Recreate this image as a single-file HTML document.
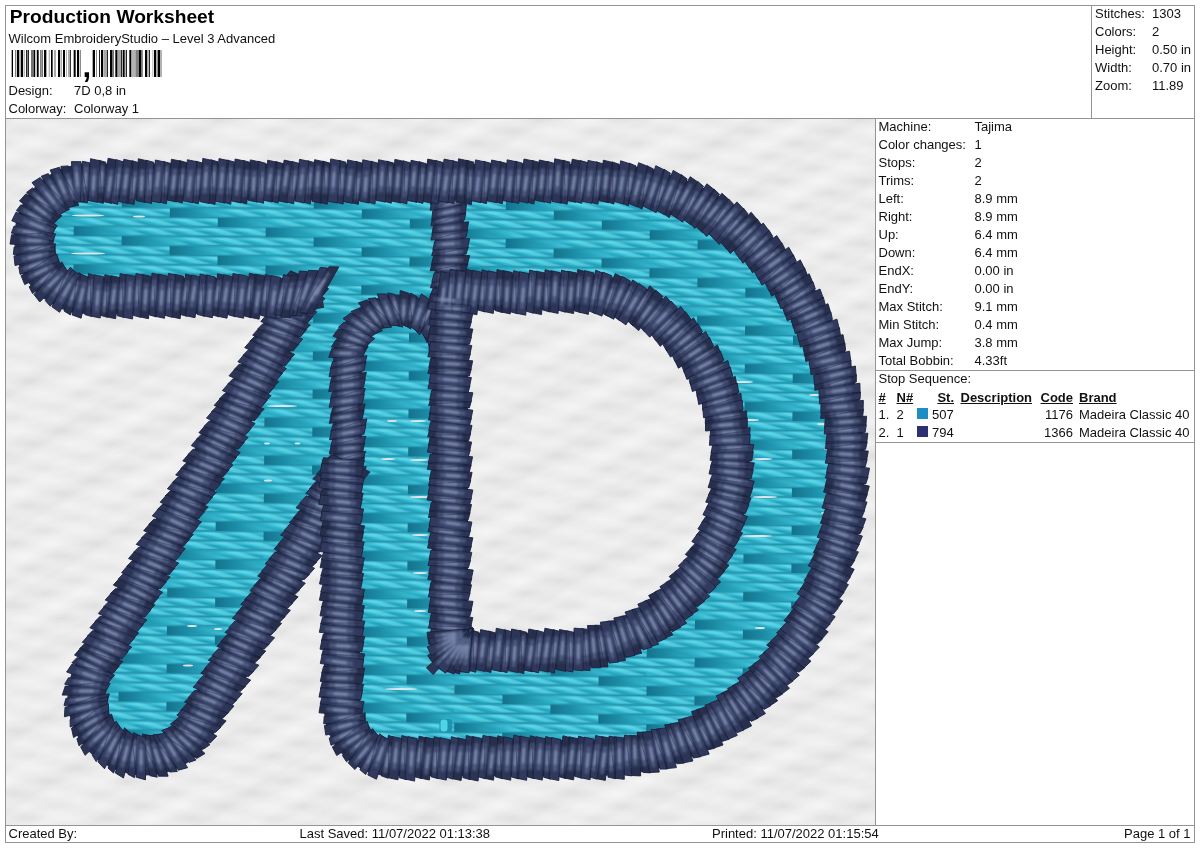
<!DOCTYPE html>
<html><head><meta charset="utf-8"><title>Production Worksheet</title>
<style>
html,body{margin:0;padding:0;background:#fff;}
body{width:1200px;height:848px;position:relative;overflow:hidden;font-family:"Liberation Sans",sans-serif;color:#111;}
.t{position:absolute;font-size:13px;line-height:15px;white-space:nowrap;}
.b{font-weight:bold;}
.u{text-decoration:underline;text-decoration-thickness:1px;text-underline-offset:0.5px;}
.title{position:absolute;left:9.8px;top:6px;font-size:19.2px;line-height:22px;font-weight:bold;white-space:nowrap;color:#000;}
.ln{position:absolute;background:#949494;}
.sw{position:absolute;width:11px;height:11px;}
svg{position:absolute;display:block;}
#pg{position:absolute;left:0;top:0;width:1200px;height:848px;will-change:transform;}
</style></head><body><div id="pg">

<div class="ln" style="left:5px;top:5px;width:1190px;height:1px"></div>
<div class="ln" style="left:5px;top:842px;width:1190px;height:1px"></div>
<div class="ln" style="left:5px;top:5px;width:1px;height:838px"></div>
<div class="ln" style="left:1194px;top:5px;width:1px;height:838px"></div>
<div class="ln" style="left:5px;top:118px;width:1190px;height:1px"></div>
<div class="ln" style="left:1091px;top:5px;width:1px;height:114px"></div>
<div class="ln" style="left:875px;top:118px;width:1px;height:708px"></div>
<div class="ln" style="left:5px;top:825px;width:1190px;height:1px"></div>
<div class="ln" style="left:875px;top:370px;width:320px;height:1px"></div>
<div class="ln" style="left:875px;top:442px;width:320px;height:1px"></div>
<div class="title">Production Worksheet</div>
<div class="t " style="left:8.5px;top:31.299999999999997px;">Wilcom EmbroideryStudio – Level 3 Advanced</div>
<div class="t " style="left:8.5px;top:82.6px;">Design:</div>
<div class="t " style="left:74px;top:82.6px;">7D 0,8 in</div>
<div class="t " style="left:8.5px;top:100.6px;">Colorway:</div>
<div class="t " style="left:74px;top:100.6px;">Colorway 1</div>
<div class="t " style="left:1095px;top:5.5px;">Stitches:</div>
<div class="t " style="left:1152px;top:5.5px;">1303</div>
<div class="t " style="left:1095px;top:23.5px;">Colors:</div>
<div class="t " style="left:1152px;top:23.5px;">2</div>
<div class="t " style="left:1095px;top:41.5px;">Height:</div>
<div class="t " style="left:1152px;top:41.5px;">0.50 in</div>
<div class="t " style="left:1095px;top:59.5px;">Width:</div>
<div class="t " style="left:1152px;top:59.5px;">0.70 in</div>
<div class="t " style="left:1095px;top:77.5px;">Zoom:</div>
<div class="t " style="left:1152px;top:77.5px;">11.89</div>
<div class="t " style="left:878.5px;top:118.5px;">Machine:</div>
<div class="t " style="left:974.5px;top:118.5px;">Tajima</div>
<div class="t " style="left:878.5px;top:136.5px;">Color changes:</div>
<div class="t " style="left:974.5px;top:136.5px;">1</div>
<div class="t " style="left:878.5px;top:154.5px;">Stops:</div>
<div class="t " style="left:974.5px;top:154.5px;">2</div>
<div class="t " style="left:878.5px;top:172.5px;">Trims:</div>
<div class="t " style="left:974.5px;top:172.5px;">2</div>
<div class="t " style="left:878.5px;top:190.5px;">Left:</div>
<div class="t " style="left:974.5px;top:190.5px;">8.9 mm</div>
<div class="t " style="left:878.5px;top:208.5px;">Right:</div>
<div class="t " style="left:974.5px;top:208.5px;">8.9 mm</div>
<div class="t " style="left:878.5px;top:226.5px;">Up:</div>
<div class="t " style="left:974.5px;top:226.5px;">6.4 mm</div>
<div class="t " style="left:878.5px;top:244.5px;">Down:</div>
<div class="t " style="left:974.5px;top:244.5px;">6.4 mm</div>
<div class="t " style="left:878.5px;top:262.5px;">EndX:</div>
<div class="t " style="left:974.5px;top:262.5px;">0.00 in</div>
<div class="t " style="left:878.5px;top:280.5px;">EndY:</div>
<div class="t " style="left:974.5px;top:280.5px;">0.00 in</div>
<div class="t " style="left:878.5px;top:298.5px;">Max Stitch:</div>
<div class="t " style="left:974.5px;top:298.5px;">9.1 mm</div>
<div class="t " style="left:878.5px;top:316.5px;">Min Stitch:</div>
<div class="t " style="left:974.5px;top:316.5px;">0.4 mm</div>
<div class="t " style="left:878.5px;top:334.5px;">Max Jump:</div>
<div class="t " style="left:974.5px;top:334.5px;">3.8 mm</div>
<div class="t " style="left:878.5px;top:352.5px;">Total Bobbin:</div>
<div class="t " style="left:974.5px;top:352.5px;">4.33ft</div>
<div class="t " style="left:878.5px;top:371px;">Stop Sequence:</div>
<div class="t b u" style="left:878.5px;top:389.5px;">#</div>
<div class="t b u" style="left:896.5px;top:389.5px;">N#</div>
<div class="t b u" style="right:246px;top:389.5px;">St.</div>
<div class="t b u" style="left:960.5px;top:389.5px;">Description</div>
<div class="t b u" style="right:127px;top:389.5px;">Code</div>
<div class="t b u" style="left:1079px;top:389.5px;">Brand</div>
<div class="t " style="left:878.5px;top:406.5px;">1.</div>
<div class="t " style="left:896.5px;top:406.5px;">2</div>
<div class="sw" style="left:917px;top:408px;background:#1b8fc3"></div>
<div class="t " style="left:932px;top:406.5px;">507</div>
<div class="t " style="right:127px;top:406.5px;">1176</div>
<div class="t " style="left:1079px;top:406.5px;">Madeira Classic 40</div>
<div class="t " style="left:878.5px;top:424.8px;">2.</div>
<div class="t " style="left:896.5px;top:424.8px;">1</div>
<div class="sw" style="left:917px;top:426px;background:#2b3170"></div>
<div class="t " style="left:932px;top:424.8px;">794</div>
<div class="t " style="right:127px;top:424.8px;">1366</div>
<div class="t " style="left:1079px;top:424.8px;">Madeira Classic 40</div>
<div class="t " style="left:8.5px;top:825.5px;">Created By:</div>
<div class="t " style="left:299.5px;top:825.5px;">Last Saved: 11/07/2022 01:13:38</div>
<div class="t " style="left:712px;top:825.5px;">Printed: 11/07/2022 01:15:54</div>
<div class="t " style="right:9.5px;top:825.5px;">Page 1 of 1</div>
<svg style="left:0;top:49.8px" width="170" height="27" viewBox="0 0 170 27"><rect x="11.67" y="0" width="1.33" height="27" fill="#000" fill-opacity="1"/><rect x="15.00" y="0" width="1.33" height="27" fill="#000" fill-opacity="0.5"/><rect x="17.00" y="0" width="2.00" height="27" fill="#000" fill-opacity="1"/><rect x="19.33" y="0" width="1.33" height="27" fill="#000" fill-opacity="0.45"/><rect x="21.00" y="0" width="2.00" height="27" fill="#000" fill-opacity="1"/><rect x="23.67" y="0" width="1.00" height="27" fill="#000" fill-opacity="0.4"/><rect x="26.00" y="0" width="1.33" height="27" fill="#000" fill-opacity="0.85"/><rect x="27.67" y="0" width="1.33" height="27" fill="#000" fill-opacity="0.85"/><rect x="31.00" y="0" width="2.67" height="27" fill="#000" fill-opacity="0.55"/><rect x="33.67" y="0" width="1.33" height="27" fill="#000" fill-opacity="1"/><rect x="35.33" y="0" width="1.33" height="27" fill="#000" fill-opacity="0.3"/><rect x="37.00" y="0" width="1.67" height="27" fill="#000" fill-opacity="1"/><rect x="40.00" y="0" width="1.33" height="27" fill="#000" fill-opacity="0.5"/><rect x="41.67" y="0" width="1.00" height="27" fill="#000" fill-opacity="0.8"/><rect x="44.00" y="0" width="2.33" height="27" fill="#000" fill-opacity="1"/><rect x="48.67" y="0" width="1.33" height="27" fill="#000" fill-opacity="0.3"/><rect x="51.00" y="0" width="1.67" height="27" fill="#000" fill-opacity="1"/><rect x="54.33" y="0" width="1.33" height="27" fill="#000" fill-opacity="0.5"/><rect x="58.00" y="0" width="2.00" height="27" fill="#000" fill-opacity="1"/><rect x="60.67" y="0" width="1.00" height="27" fill="#000" fill-opacity="0.5"/><rect x="63.00" y="0" width="2.00" height="27" fill="#000" fill-opacity="1"/><rect x="66.00" y="0" width="1.00" height="27" fill="#000" fill-opacity="0.3"/><rect x="68.33" y="0" width="1.33" height="27" fill="#000" fill-opacity="0.5"/><rect x="70.00" y="0" width="1.00" height="27" fill="#000" fill-opacity="0.8"/><rect x="73.67" y="0" width="2.00" height="27" fill="#000" fill-opacity="1"/><rect x="77.00" y="0" width="2.00" height="27" fill="#000" fill-opacity="1"/><rect x="79.67" y="0" width="1.33" height="27" fill="#000" fill-opacity="0.45"/><rect x="92.67" y="0" width="2.33" height="27" fill="#000" fill-opacity="1"/><rect x="96.00" y="0" width="1.00" height="27" fill="#000" fill-opacity="0.45"/><rect x="99.00" y="0" width="1.00" height="27" fill="#000" fill-opacity="0.85"/><rect x="101.00" y="0" width="2.00" height="27" fill="#000" fill-opacity="1"/><rect x="103.33" y="0" width="3.67" height="27" fill="#000" fill-opacity="0.35"/><rect x="107.00" y="0" width="1.00" height="27" fill="#000" fill-opacity="0.85"/><rect x="110.00" y="0" width="2.00" height="27" fill="#000" fill-opacity="1"/><rect x="112.33" y="0" width="1.33" height="27" fill="#000" fill-opacity="0.8"/><rect x="115.33" y="0" width="2.00" height="27" fill="#000" fill-opacity="1"/><rect x="117.33" y="0" width="3.67" height="27" fill="#000" fill-opacity="0.35"/><rect x="121.00" y="0" width="1.00" height="27" fill="#000" fill-opacity="0.85"/><rect x="122.67" y="0" width="2.00" height="27" fill="#000" fill-opacity="1"/><rect x="125.67" y="0" width="1.33" height="27" fill="#000" fill-opacity="0.85"/><rect x="129.33" y="0" width="2.00" height="27" fill="#000" fill-opacity="1"/><rect x="131.67" y="0" width="3.33" height="27" fill="#000" fill-opacity="0.3"/><rect x="135.33" y="0" width="3.67" height="27" fill="#000" fill-opacity="0.5"/><rect x="139.00" y="0" width="2.33" height="27" fill="#000" fill-opacity="1"/><rect x="141.33" y="0" width="1.67" height="27" fill="#000" fill-opacity="0.45"/><rect x="145.00" y="0" width="2.33" height="27" fill="#000" fill-opacity="1"/><rect x="148.67" y="0" width="1.33" height="27" fill="#000" fill-opacity="0.85"/><rect x="152.33" y="0" width="1.00" height="27" fill="#000" fill-opacity="0.3"/><rect x="154.00" y="0" width="2.00" height="27" fill="#000" fill-opacity="1"/><rect x="156.33" y="0" width="1.00" height="27" fill="#000" fill-opacity="0.45"/><rect x="157.67" y="0" width="2.33" height="27" fill="#000" fill-opacity="1"/><rect x="160.33" y="0" width="1.33" height="27" fill="#000" fill-opacity="0.45"/></svg>
<div class="t b" style="left:82.6px;top:48.5px;font-size:31px;line-height:36px;color:#000">,</div>
<svg style="left:6px;top:119px" width="869" height="706" viewBox="6 119 869 706"><defs>
<radialGradient id="fd"><stop offset="0" stop-color="#d8d8d8" stop-opacity=".6"/><stop offset="1" stop-color="#d9d9d9" stop-opacity="0"/></radialGradient>
<radialGradient id="fl"><stop offset="0" stop-color="#f7f7f7" stop-opacity=".6"/><stop offset="1" stop-color="#f7f7f7" stop-opacity="0"/></radialGradient>
<pattern id="fab" width="80" height="62.5" patternUnits="userSpaceOnUse"><rect width="80" height="62.5" fill="#ebebeb"/><ellipse cx="-18" cy="-6.5" rx="22" ry="6.5" fill="url(#fd)"/><ellipse cx="22" cy="-6.5" rx="20" ry="6" fill="url(#fl)"/><ellipse cx="62" cy="-6.5" rx="22" ry="6.5" fill="url(#fd)"/><ellipse cx="102" cy="-6.5" rx="20" ry="6" fill="url(#fl)"/><ellipse cx="142" cy="-6.5" rx="22" ry="6.5" fill="url(#fd)"/><ellipse cx="182" cy="-6.5" rx="20" ry="6" fill="url(#fl)"/><ellipse cx="-50" cy="6.0" rx="22" ry="6.5" fill="url(#fd)"/><ellipse cx="-10" cy="6.0" rx="20" ry="6" fill="url(#fl)"/><ellipse cx="30" cy="6.0" rx="22" ry="6.5" fill="url(#fd)"/><ellipse cx="70" cy="6.0" rx="20" ry="6" fill="url(#fl)"/><ellipse cx="110" cy="6.0" rx="22" ry="6.5" fill="url(#fd)"/><ellipse cx="150" cy="6.0" rx="20" ry="6" fill="url(#fl)"/><ellipse cx="-2" cy="18.5" rx="22" ry="6.5" fill="url(#fd)"/><ellipse cx="38" cy="18.5" rx="20" ry="6" fill="url(#fl)"/><ellipse cx="78" cy="18.5" rx="22" ry="6.5" fill="url(#fd)"/><ellipse cx="118" cy="18.5" rx="20" ry="6" fill="url(#fl)"/><ellipse cx="158" cy="18.5" rx="22" ry="6.5" fill="url(#fd)"/><ellipse cx="198" cy="18.5" rx="20" ry="6" fill="url(#fl)"/><ellipse cx="-34" cy="31.0" rx="22" ry="6.5" fill="url(#fd)"/><ellipse cx="6" cy="31.0" rx="20" ry="6" fill="url(#fl)"/><ellipse cx="46" cy="31.0" rx="22" ry="6.5" fill="url(#fd)"/><ellipse cx="86" cy="31.0" rx="20" ry="6" fill="url(#fl)"/><ellipse cx="126" cy="31.0" rx="22" ry="6.5" fill="url(#fd)"/><ellipse cx="166" cy="31.0" rx="20" ry="6" fill="url(#fl)"/><ellipse cx="-66" cy="43.5" rx="22" ry="6.5" fill="url(#fd)"/><ellipse cx="-26" cy="43.5" rx="20" ry="6" fill="url(#fl)"/><ellipse cx="14" cy="43.5" rx="22" ry="6.5" fill="url(#fd)"/><ellipse cx="54" cy="43.5" rx="20" ry="6" fill="url(#fl)"/><ellipse cx="94" cy="43.5" rx="22" ry="6.5" fill="url(#fd)"/><ellipse cx="134" cy="43.5" rx="20" ry="6" fill="url(#fl)"/><ellipse cx="-18" cy="56.0" rx="22" ry="6.5" fill="url(#fd)"/><ellipse cx="22" cy="56.0" rx="20" ry="6" fill="url(#fl)"/><ellipse cx="62" cy="56.0" rx="22" ry="6.5" fill="url(#fd)"/><ellipse cx="102" cy="56.0" rx="20" ry="6" fill="url(#fl)"/><ellipse cx="142" cy="56.0" rx="22" ry="6.5" fill="url(#fd)"/><ellipse cx="182" cy="56.0" rx="20" ry="6" fill="url(#fl)"/><ellipse cx="-50" cy="68.5" rx="22" ry="6.5" fill="url(#fd)"/><ellipse cx="-10" cy="68.5" rx="20" ry="6" fill="url(#fl)"/><ellipse cx="30" cy="68.5" rx="22" ry="6.5" fill="url(#fd)"/><ellipse cx="70" cy="68.5" rx="20" ry="6" fill="url(#fl)"/><ellipse cx="110" cy="68.5" rx="22" ry="6.5" fill="url(#fd)"/><ellipse cx="150" cy="68.5" rx="20" ry="6" fill="url(#fl)"/></pattern><linearGradient id="sg" x1="0" x2="0" y1="0" y2="1"><stop offset="0" stop-color="#fff" stop-opacity="0"/><stop offset=".3" stop-color="#fff" stop-opacity=".26"/><stop offset=".5" stop-color="#fff" stop-opacity="0"/><stop offset=".8" stop-color="#d2d2d2" stop-opacity=".15"/><stop offset="1" stop-color="#fff" stop-opacity="0"/></linearGradient><pattern id="streak" width="200" height="58" patternUnits="userSpaceOnUse" patternTransform="rotate(-33)"><rect width="200" height="58" fill="url(#sg)"/></pattern><linearGradient id="tg" x1="0" x2="1" y1="0" y2="0">
<stop offset="0" stop-color="#14728c"/><stop offset=".3" stop-color="#1c8ca6"/><stop offset=".75" stop-color="#2badc5" stop-opacity=".7"/><stop offset="1" stop-color="#3cc6dc" stop-opacity="0"/></linearGradient>
<linearGradient id="tv" x1="0" x2="0" y1="0" y2="1">
<stop offset="0" stop-color="#0f5f76" stop-opacity=".42"/><stop offset=".25" stop-color="#7eeaf8" stop-opacity=".38"/><stop offset=".6" stop-color="#86eefa" stop-opacity="0"/><stop offset="1" stop-color="#0f5f76" stop-opacity=".46"/></linearGradient><pattern id="teal" width="192" height="38.00" patternUnits="userSpaceOnUse" patternTransform="translate(73.75 226) rotate(0.4)"><rect width="192" height="38.0" fill="#2ab6d0"/><path d="M-32,1.0h13l26,7.5h-13z" fill="#9af2fc" fill-opacity=".34"/><path d="M-16,1.0h9l26,7.5h-9z" fill="#0f6a84" fill-opacity=".33"/><path d="M0,1.0h13l26,7.5h-13z" fill="#9af2fc" fill-opacity=".34"/><path d="M16,1.0h9l26,7.5h-9z" fill="#0f6a84" fill-opacity=".33"/><path d="M32,1.0h13l26,7.5h-13z" fill="#9af2fc" fill-opacity=".34"/><path d="M48,1.0h9l26,7.5h-9z" fill="#0f6a84" fill-opacity=".33"/><path d="M64,1.0h13l26,7.5h-13z" fill="#9af2fc" fill-opacity=".34"/><path d="M80,1.0h9l26,7.5h-9z" fill="#0f6a84" fill-opacity=".33"/><path d="M96,1.0h13l26,7.5h-13z" fill="#9af2fc" fill-opacity=".34"/><path d="M112,1.0h9l26,7.5h-9z" fill="#0f6a84" fill-opacity=".33"/><path d="M128,1.0h13l26,7.5h-13z" fill="#9af2fc" fill-opacity=".34"/><path d="M144,1.0h9l26,7.5h-9z" fill="#0f6a84" fill-opacity=".33"/><path d="M160,1.0h13l26,7.5h-13z" fill="#9af2fc" fill-opacity=".34"/><path d="M176,1.0h9l26,7.5h-9z" fill="#0f6a84" fill-opacity=".33"/><path d="M192,1.0h13l26,7.5h-13z" fill="#9af2fc" fill-opacity=".34"/><path d="M208,1.0h9l26,7.5h-9z" fill="#0f6a84" fill-opacity=".33"/><rect x="0" y="0.00" width="192" height="9.50" fill="url(#tv)"/><rect x="-192" y="0.30" width="67.2" height="9.20" fill="url(#tg)"/><rect x="0" y="0.30" width="67.2" height="9.20" fill="url(#tg)"/><path d="M-21,10.5h13l26,7.5h-13z" fill="#9af2fc" fill-opacity=".34"/><path d="M-5,10.5h9l26,7.5h-9z" fill="#0f6a84" fill-opacity=".33"/><path d="M11,10.5h13l26,7.5h-13z" fill="#9af2fc" fill-opacity=".34"/><path d="M27,10.5h9l26,7.5h-9z" fill="#0f6a84" fill-opacity=".33"/><path d="M43,10.5h13l26,7.5h-13z" fill="#9af2fc" fill-opacity=".34"/><path d="M59,10.5h9l26,7.5h-9z" fill="#0f6a84" fill-opacity=".33"/><path d="M75,10.5h13l26,7.5h-13z" fill="#9af2fc" fill-opacity=".34"/><path d="M91,10.5h9l26,7.5h-9z" fill="#0f6a84" fill-opacity=".33"/><path d="M107,10.5h13l26,7.5h-13z" fill="#9af2fc" fill-opacity=".34"/><path d="M123,10.5h9l26,7.5h-9z" fill="#0f6a84" fill-opacity=".33"/><path d="M139,10.5h13l26,7.5h-13z" fill="#9af2fc" fill-opacity=".34"/><path d="M155,10.5h9l26,7.5h-9z" fill="#0f6a84" fill-opacity=".33"/><path d="M171,10.5h13l26,7.5h-13z" fill="#9af2fc" fill-opacity=".34"/><path d="M187,10.5h9l26,7.5h-9z" fill="#0f6a84" fill-opacity=".33"/><path d="M203,10.5h13l26,7.5h-13z" fill="#9af2fc" fill-opacity=".34"/><path d="M219,10.5h9l26,7.5h-9z" fill="#0f6a84" fill-opacity=".33"/><rect x="0" y="9.50" width="192" height="9.50" fill="url(#tv)"/><rect x="-144" y="9.80" width="67.2" height="9.20" fill="url(#tg)"/><rect x="48" y="9.80" width="67.2" height="9.20" fill="url(#tg)"/><path d="M-10,20.0h13l26,7.5h-13z" fill="#9af2fc" fill-opacity=".34"/><path d="M6,20.0h9l26,7.5h-9z" fill="#0f6a84" fill-opacity=".33"/><path d="M22,20.0h13l26,7.5h-13z" fill="#9af2fc" fill-opacity=".34"/><path d="M38,20.0h9l26,7.5h-9z" fill="#0f6a84" fill-opacity=".33"/><path d="M54,20.0h13l26,7.5h-13z" fill="#9af2fc" fill-opacity=".34"/><path d="M70,20.0h9l26,7.5h-9z" fill="#0f6a84" fill-opacity=".33"/><path d="M86,20.0h13l26,7.5h-13z" fill="#9af2fc" fill-opacity=".34"/><path d="M102,20.0h9l26,7.5h-9z" fill="#0f6a84" fill-opacity=".33"/><path d="M118,20.0h13l26,7.5h-13z" fill="#9af2fc" fill-opacity=".34"/><path d="M134,20.0h9l26,7.5h-9z" fill="#0f6a84" fill-opacity=".33"/><path d="M150,20.0h13l26,7.5h-13z" fill="#9af2fc" fill-opacity=".34"/><path d="M166,20.0h9l26,7.5h-9z" fill="#0f6a84" fill-opacity=".33"/><path d="M182,20.0h13l26,7.5h-13z" fill="#9af2fc" fill-opacity=".34"/><path d="M198,20.0h9l26,7.5h-9z" fill="#0f6a84" fill-opacity=".33"/><path d="M214,20.0h13l26,7.5h-13z" fill="#9af2fc" fill-opacity=".34"/><path d="M230,20.0h9l26,7.5h-9z" fill="#0f6a84" fill-opacity=".33"/><rect x="0" y="19.00" width="192" height="9.50" fill="url(#tv)"/><rect x="-96" y="19.30" width="67.2" height="9.20" fill="url(#tg)"/><rect x="96" y="19.30" width="67.2" height="9.20" fill="url(#tg)"/><path d="M-31,29.5h13l26,7.5h-13z" fill="#9af2fc" fill-opacity=".34"/><path d="M-15,29.5h9l26,7.5h-9z" fill="#0f6a84" fill-opacity=".33"/><path d="M1,29.5h13l26,7.5h-13z" fill="#9af2fc" fill-opacity=".34"/><path d="M17,29.5h9l26,7.5h-9z" fill="#0f6a84" fill-opacity=".33"/><path d="M33,29.5h13l26,7.5h-13z" fill="#9af2fc" fill-opacity=".34"/><path d="M49,29.5h9l26,7.5h-9z" fill="#0f6a84" fill-opacity=".33"/><path d="M65,29.5h13l26,7.5h-13z" fill="#9af2fc" fill-opacity=".34"/><path d="M81,29.5h9l26,7.5h-9z" fill="#0f6a84" fill-opacity=".33"/><path d="M97,29.5h13l26,7.5h-13z" fill="#9af2fc" fill-opacity=".34"/><path d="M113,29.5h9l26,7.5h-9z" fill="#0f6a84" fill-opacity=".33"/><path d="M129,29.5h13l26,7.5h-13z" fill="#9af2fc" fill-opacity=".34"/><path d="M145,29.5h9l26,7.5h-9z" fill="#0f6a84" fill-opacity=".33"/><path d="M161,29.5h13l26,7.5h-13z" fill="#9af2fc" fill-opacity=".34"/><path d="M177,29.5h9l26,7.5h-9z" fill="#0f6a84" fill-opacity=".33"/><path d="M193,29.5h13l26,7.5h-13z" fill="#9af2fc" fill-opacity=".34"/><path d="M209,29.5h9l26,7.5h-9z" fill="#0f6a84" fill-opacity=".33"/><rect x="0" y="28.50" width="192" height="9.50" fill="url(#tv)"/><rect x="-48" y="28.80" width="67.2" height="9.20" fill="url(#tg)"/><rect x="144" y="28.80" width="67.2" height="9.20" fill="url(#tg)"/></pattern><filter id="bl" x="-5%" y="-5%" width="110%" height="110%"><feGaussianBlur stdDeviation="1.25"/></filter><filter id="bs" x="-5%" y="-5%" width="110%" height="110%"><feGaussianBlur stdDeviation="0.7"/></filter></defs><rect x="6" y="119" width="869" height="706" fill="url(#fab)"/><rect x="6" y="119" width="869" height="706" fill="url(#streak)"/><path d="M 89.5 181.5 L 600 182 C 736 182 847 309 847 465 C 847 626 736 758 600 758 L 392 758 A 50 50 0 0 1 342 708 L 342 476 L 196.5 727 A 59 59 0 0 1 93.5 669 L 300 296 L 89.5 296 A 57.25 57.25 0 0 1 89.5 181.5 Z M 450 292 L 580 292 C 663.6 292 732 370 732 465 C 732 567 654.6 651 560 651 L 450 651 Z" fill="url(#teal)" fill-rule="evenodd"/><ellipse cx="88" cy="215.5" rx="16" ry="1.1" fill="#dde8ec"/><ellipse cx="139" cy="216.5" rx="6" ry="1.1" fill="#dde8ec"/><ellipse cx="88" cy="253.5" rx="17" ry="1.1" fill="#dde8ec"/><ellipse cx="282" cy="406" rx="15" ry="1.1" fill="#dde8ec"/><ellipse cx="267" cy="443.5" rx="3" ry="1.1" fill="#dde8ec"/><ellipse cx="297.5" cy="443.5" rx="3" ry="1.1" fill="#dde8ec"/><ellipse cx="268" cy="480.5" rx="4" ry="1.1" fill="#dde8ec"/><ellipse cx="392" cy="421" rx="5" ry="1.1" fill="#dde8ec"/><ellipse cx="418" cy="421" rx="8" ry="1.1" fill="#dde8ec"/><ellipse cx="388" cy="459" rx="7" ry="1.1" fill="#dde8ec"/><ellipse cx="419" cy="460" rx="9" ry="1.1" fill="#dde8ec"/><ellipse cx="420" cy="535" rx="8" ry="1.1" fill="#dde8ec"/><ellipse cx="420" cy="573" rx="7" ry="1.1" fill="#dde8ec"/><ellipse cx="743" cy="382" rx="10" ry="1.1" fill="#dde8ec"/><ellipse cx="815" cy="395" rx="6" ry="1.1" fill="#dde8ec"/><ellipse cx="751" cy="420" rx="8" ry="1.1" fill="#dde8ec"/><ellipse cx="822" cy="424" rx="5" ry="1.1" fill="#dde8ec"/><ellipse cx="763" cy="459" rx="9" ry="1.1" fill="#dde8ec"/><ellipse cx="829" cy="449" rx="5" ry="1.1" fill="#dde8ec"/><ellipse cx="765" cy="497" rx="12" ry="1.1" fill="#dde8ec"/><ellipse cx="825" cy="513" rx="4" ry="1.1" fill="#dde8ec"/><ellipse cx="757" cy="536" rx="15" ry="1.1" fill="#dde8ec"/><ellipse cx="679" cy="619" rx="5" ry="1.1" fill="#dde8ec"/><ellipse cx="760" cy="628" rx="5" ry="1.1" fill="#dde8ec"/><ellipse cx="401" cy="689" rx="16" ry="1.1" fill="#dde8ec"/><ellipse cx="345" cy="560" rx="4" ry="1.1" fill="#dde8ec"/><ellipse cx="192" cy="626" rx="5" ry="1.1" fill="#dde8ec"/><ellipse cx="218" cy="629" rx="4" ry="1.1" fill="#dde8ec"/><ellipse cx="188" cy="665.5" rx="5" ry="1.1" fill="#dde8ec"/><ellipse cx="420" cy="497" rx="10" ry="1.1" fill="#dde8ec"/><ellipse cx="420" cy="611" rx="6" ry="1.1" fill="#dde8ec"/><path d="M 347.5 480 L 347.5 360 A 51 51 0 0 1 449.5 360 L 449.5 380" fill="none" stroke-linejoin="round" stroke-linecap="butt" stroke="#262e4d" stroke-width="29"/><path d="M328.8,487.2L330.8,477.8L365.2,472.2L363.2,481.6zM329.4,454L331.4,444.6L364.7,442.2L362.7,451.6zM329.3,423.3L331.3,413.9L364.2,409.7L362.2,419.1zM330.7,415.3L332.7,408.1L365.2,403.9L363.2,411.1zM330.1,383.6L332.1,376.4L366.4,372.4L364.4,379.6zM331.5,346.8L335.4,340.5L368.1,346.6L364.2,353zM332.8,336.2L338.6,328.6L371.6,340.1L365.8,347.7zM358.4,302.8L367.5,299.9L388,326.7L378.8,329.6zM400.2,290.5L409.3,293.4L408.1,326.7L399,323.8zM410.6,293L417.1,296.7L410.9,329L404.4,325.3zM447.4,311.5L450.5,318.3L427,342.6L423.9,335.7zM466.1,348.5L464.6,355.8L430.6,362.9L432,355.5zM467.8,357.3L465.8,366.7L432.3,371.7L434.3,362.3z" fill="#272f4c" stroke="#1a2140" stroke-width=".9" stroke-linejoin="round"/><path d="M328.5,470.6L330.5,461.2L364.5,457.2L362.5,466.6zM329.9,462.6L331.9,455.4L365.5,451.4L363.5,458.6zM330.9,431.9L332.9,424.7L367,418.9L365,426.1zM330.6,399.3L332.6,392.1L365.3,388.3L363.3,395.5zM328.7,391.6L330.7,382.2L365.4,378.2L363.4,387.6zM328.8,357.3L332,348.2L365.7,349.2L362.5,358.3zM343,318.6L350.8,313.1L378.9,331.3L371,336.8zM351,311.6L357.9,308.7L382.5,330.7L375.6,333.6zM387.8,292.8L395.1,294.5L402.6,327.1L395.3,325.4zM430.6,299.2L435.6,304.8L419.6,334.9L414.6,329.4zM440.2,303.4L445.9,311.1L426.2,339L420.5,331.3zM464.8,337.8L465,347.4L432.1,359.7L431.9,350.1zM467.5,373.4L465.5,382.8L432.6,387.2L434.6,377.8z" fill="#2c3555" stroke="#1a2140" stroke-width=".9" stroke-linejoin="round"/><path d="M330.2,479.2L332.2,472L366.2,466.4L364.2,473.6zM330.8,446L332.8,438.8L365.7,436.4L363.7,443.6zM329.5,439.9L331.5,430.5L366,424.7L364,434.1zM329.2,407.3L331.2,397.9L364.3,394.1L362.3,403.5zM329.1,376.8L331.1,367.4L366,361.4L364,370.8zM330.5,368.8L332.5,361.6L367,355.6L365,362.8zM338.5,327.1L344.1,322.2L374.7,338.5L369,343.3zM368.3,298.5L375.7,297.8L391.6,327.2L384.2,327.8zM377.2,293.9L386.8,294L399.4,325.4L389.7,325.4zM421.3,293.7L429.1,299.3L417.8,331.9L410,326.3zM456.1,318.7L459.2,327.8L430.1,348.9L427,339.8zM460.5,328.7L461.4,336.1L429.7,352.3L428.9,344.9zM466.4,365.3L464.4,372.5L431.3,377.5L433.3,370.3z" fill="#313a5c" stroke="#1a2140" stroke-width=".9" stroke-linejoin="round"/><g filter="url(#bl)" fill="none" stroke-linecap="round"><path d="M 347.5 480 L 347.5 360 A 51 51 0 0 1 449.5 360 L 449.5 380" stroke="#3a466c" stroke-width="21.1" stroke-opacity=".3" stroke-linejoin="round" stroke-linecap="butt"/><path d="M 347.5 480 L 347.5 360 A 51 51 0 0 1 449.5 360 L 449.5 380" stroke="#4a577f" stroke-width="10.2" stroke-opacity=".3" stroke-linejoin="round" stroke-linecap="butt"/><path d="M337,481.7L357,478.3M338.1,473.8L357.8,470.4M337.8,465.4L357.5,463M339.5,457.5L359,455.1M339.3,449.1L358.6,447.7M339.5,441.2L358.6,439.8M338.5,434.3L358.5,430.9M339.1,426.4L358.8,423M335.1,418L354.2,415.6M336.7,410.1L355.5,407.7M337.1,402.1L356.3,399.9M340.1,394.2L359.1,392M338,386.4L358.2,384M337.7,378.5L357.6,376.1M339.3,371.1L359.5,367.7M339.4,363.2L359.4,359.8M335.4,353L355,353.6M341.7,344.6L360.7,348.2M344.8,336.2L364,342.9M349.3,328.3L367,337.7M352.6,319.9L368.9,330.5M361.6,316.1L375.9,328.9M367.9,308.7L379.8,324.3M375.5,302.8L384.7,319.8M384.7,302.1L391.9,320.4M393.6,298L398,317M404,300.8L403.3,320.1M413.7,299.9L410.1,318.7M421.9,304.6L415.4,323.6M431.5,306.9L422.2,324.3M439.4,312.1L428,328.3M445.5,319.7L431.9,333.8M449.3,328.6L432.5,340.9M456.2,335.8L437.9,345.2M460,344.4L440.9,351.6M456,354.5L436.3,358.6M460.5,362.7L441.1,365.7M459.8,370.6L440.7,373.6M460.8,378.7L441.7,381.3" stroke="#5b6990" stroke-width="3.5" stroke-opacity=".72"/><path d="M342,480.9L352.3,479.1M342.6,473L352.9,471.2M342.8,464.8L353,463.6M344.1,456.9L354.2,455.7M344.1,448.8L354.1,448M343.9,440.9L353.7,440.1M343.2,433.5L353.6,431.7M343.5,425.6L353.7,423.8M339.9,417.4L349.8,416.2M341.1,409.5L350.8,408.3M342,401.6L351.9,400.4M344.6,393.7L354.4,392.5M343,385.8L353.4,384.6M342.3,377.9L352.6,376.7M344.1,370.3L354.6,368.5M343.8,362.4L354.2,360.6M340.3,353.2L350.4,353.5M346.1,345.4L355.9,347.3M349.5,337.8L359.4,341.3M353.4,330.4L362.5,335.3M356.6,322.5L365,328M364.9,319L372.3,325.6M370.9,312.7L377,320.8M377.7,306.8L382.5,315.6M386.5,306.6L390.2,316.1M394.7,302.4L396.9,312.2M403.8,305.7L403.5,315.7M412.9,304.3L411,314M420.3,309.4L416.9,319.2M429.4,311L424.6,320M436.5,316.2L430.5,324.6M442.2,323L435.2,330.3M445.1,331.7L436.3,338M451.9,338L442.4,342.9M455.3,346.2L445.4,349.8M451.5,355.5L441.3,357.6M455.6,363.4L445.6,365M455.4,371.3L445.5,372.9M456,379.4L446.1,380.6" stroke="#8d9cc0" stroke-width="2.6" stroke-opacity=".75"/></g><path d="M332.4,477.8L361.7,468.2M332.2,461.2L361.1,453.2M333,444.6L361.3,438.2M333.1,430.5L362.3,420.7M332.9,413.9L360.9,405.7M332.8,397.9L360.9,390.1M332.3,382.2L361.8,374.2M332.7,367.4L362.4,357.4M333.6,348.4L362.8,344.8M340,329.3L370.1,334.9M351.9,314.1L379.1,326M368.3,301.3L389.8,321.8M387.1,295.5L402.6,321.2M409.2,295L412.5,323.8M428.4,300.8L422.9,330.3M444.8,312.4L431.4,339.1M457.7,328.7L435.2,350.5M463.4,347.8L436.5,362.8M464.2,366.7L435.8,375.7M464,382.8L436,391.2" fill="none" stroke="#1c2340" stroke-width="1.1" stroke-opacity=".38" filter="url(#bs)"/><path d="M 347 466 L 196.5 727 A 59 59 0 0 1 93.5 669 L 307 284" fill="none" stroke-linejoin="round" stroke-linecap="butt" stroke="#262e4d" stroke-width="37"/><path d="M370.1,472L363.6,479.2L325,461.3L331.5,454.2zM354.2,500.4L347.7,507.5L309.5,488.7L315.9,481.5zM337.9,526.1L331.4,533.2L293.1,517.9L299.5,510.7zM332.6,532.4L327.3,537.6L289.3,522.5L294.6,517.3zM316.9,561.9L311.5,567.2L274,548.9L279.3,543.6zM300,589.5L294.7,594.7L257.6,576L263,570.7zM298.1,596.8L291.6,603.9L253.6,586L260.1,578.9zM281.6,623.4L275.1,630.5L236.1,613.6L242.5,606.4zM265.7,651.1L259.3,658.2L220.7,641.7L227.1,634.5zM260.5,657.4L255.1,662.6L216.9,646.3L222.2,641zM245.5,686.4L240.1,691.6L200.7,673.1L206,667.9zM228.8,712.3L223.5,717.6L184.5,702L189.9,696.8zM226.1,720.9L219.7,728L180.6,710.5L187,703.3zM205,753.5L196.7,758.4L165.1,730L173.3,725.1zM168.1,776.2L158.5,776.2L145.3,735.5L154.9,735.5zM157.2,777.2L149.9,775.7L142.3,734L149.6,735.5zM113.5,773.1L108,768.1L124.6,727.8L130.1,732.8zM79,745.8L76.9,738.7L111.5,714L113.6,721.1zM73.5,737.5L71.5,728.1L107.7,706.9L109.7,716.2zM62.2,695.1L65.3,686L107.8,686.1L104.7,695.2zM74.5,655.1L80.8,647.8L119.2,666.2L112.9,673.5zM79.6,648.7L84.9,643.4L122.9,661.5L117.7,666.9zM95,621.4L100.3,616.1L138.7,633L133.5,638.3zM110.4,593.7L115.6,588.4L154.9,605L149.6,610.4zM113.3,585.1L119.7,577.9L159,597L152.7,604.2zM128.5,558.6L134.8,551.3L175.1,567.8L168.8,575zM143.7,530.7L150,523.4L189.7,539L183.4,546.3zM148.8,524.3L154.1,519L193.4,534.4L188.2,539.7zM165.4,495.8L170.6,490.5L208.3,507.1L203,512.4zM180.8,468.6L186,463.3L224.5,478.8L219.3,484.1zM182.8,460.9L189.1,453.6L229.2,469.7L222.9,476.9zM198.9,432.7L205.2,425.5L244.5,442.1L238.2,449.3zM214.2,405.4L220.5,398.2L260.5,413.7L254.2,420.9zM219.3,399L224.6,393.7L264.3,409L259,414.3zM234.2,369.4L239.4,364.1L278.7,381.7L273.4,387.1zM249.8,341.2L255.1,335.9L294.7,354.4L289.5,359.7zM252.7,335.2L259,328L299.2,343.8L292.9,351.1zM269.5,306.4L275.8,299.2L313,316.5L306.7,323.8zM284.2,278L290.5,270.8L328.6,288.7L322.3,295.9z" fill="#272f4c" stroke="#1a2140" stroke-width=".9" stroke-linejoin="round"/><path d="M361.8,486.3L355.3,493.5L316.6,474.2L323,467.1zM356.5,492.6L351.2,497.9L312.7,478.8L318.1,473.6zM340.6,518.8L335.3,524L295.9,507.7L301.3,502.4zM324.5,547L319.2,552.2L280.5,535L285.8,529.8zM322.1,555.6L315.7,562.7L277.8,544.3L284.3,537.1zM305.3,583.2L298.8,590.3L261.4,571.3L267.9,564.2zM290.4,610.3L284,617.5L244.6,599.7L251,592.6zM285.2,616.6L279.8,621.9L240.7,604.3L246.1,599.1zM269.3,644.1L264,649.3L225,632.5L230.3,627.2zM253.6,671.5L248.3,676.7L208.3,660.2L213.6,655zM250.7,680.1L244.3,687.2L204.5,668.5L210.9,661.4zM234,706L227.6,713.2L188.3,697.4L194.8,690.3zM216.9,736.1L210.2,743L173.3,722.7L180,715.7zM210,744.6L203.8,748.9L170.3,724L176.4,719.7zM177.3,771.5L169.8,772L153.2,734.7L160.7,734.2zM134.6,777.7L127.9,774.3L133.6,732.6L140.2,736zM123.5,778L115.3,773L126.5,730.5L134.7,735.5zM85.1,755.3L80.6,746.8L111.8,717.4L116.3,725.9zM64.4,716.8L65,707.2L107.7,696.7L107.2,706.3zM64,705.6L65.9,698.4L109.3,693.8L107.4,701zM71.9,662.7L77.2,657.4L114.8,675.3L109.6,680.7zM87.5,635.9L92.7,630.6L131.8,647L126.6,652.3zM89.9,627.8L96.2,620.6L135,637.6L128.7,644.9zM105.2,600.1L111.5,592.9L151.1,609.7L144.8,617zM121.6,572.7L127.9,565.4L166.5,581.7L160.2,588.9zM126.8,566.3L132,560.9L170.3,577L165,582.3zM141.4,538L146.6,532.7L185.5,548.7L180.2,554zM157.4,509.5L162.7,504.1L201.5,521.9L196.3,527.2zM160.2,502.2L166.5,495L204.5,511.8L198.2,519zM175.7,475L182,467.8L220.8,483.4L214.5,490.7zM191.3,445.6L197.6,438.3L236.6,457.2L230.3,464.5zM196.5,439.2L201.7,433.9L240.3,452.6L235.1,457.9zM211.6,411.7L216.8,406.4L255.1,423.5L249.8,428.9zM227.6,384.2L232.8,378.9L271.1,395.6L265.8,400.9zM229,375.8L235.4,368.6L274.9,386.4L268.6,393.7zM244.7,347.6L251,340.4L291,359L284.7,366.3zM260.8,321.5L267.1,314.2L306.6,329.7L300.3,336.9zM265.9,315.1L271.2,309.8L310.4,325L305.1,330.3zM282,285.6L287.2,280.2L325.1,298.5L319.8,303.8z" fill="#2c3555" stroke="#1a2140" stroke-width=".9" stroke-linejoin="round"/><path d="M364.8,478.3L359.5,483.6L321.2,465.9L326.6,460.7zM348.9,506.7L343.6,511.9L305.7,493.3L311,488zM345.9,512.5L339.5,519.6L299.8,503.1L306.2,495.9zM329.7,540.7L323.3,547.8L284.3,530.4L290.7,523.2zM314.6,568.2L308.2,575.3L268.8,559.1L275.2,552zM309.4,574.5L304.1,579.7L265,563.7L270.3,558.5zM292.8,603.1L287.5,608.3L249.8,590.6L255.2,585.4zM276.3,629.7L271,634.9L232.3,618.2L237.6,613zM274.6,637.7L268.1,644.9L228.8,627.9L235.2,620.7zM258.9,665.2L252.5,672.3L212.1,655.6L218.6,648.5zM242.2,693.7L235.8,700.8L196.9,682.5L203.4,675.4zM236.9,700L231.6,705.2L193.1,687.1L198.5,681.9zM220.9,727.2L215.5,732.4L176.8,715.1L182.1,709.8zM196,760L189,762.4L161.7,730.4L168.8,727.9zM187.6,767.7L178.3,770.2L156.7,735.1L166,732.6zM145.5,779.8L136.2,777.2L136.2,734.7L145.4,737.3zM104.5,768.8L98,761.8L117.3,724.4L123.9,731.4zM96.2,761.6L92.3,755.2L116.2,721.1L120.2,727.5zM70.2,727L70.1,719.5L108.4,703.5L108.5,710.9zM64.7,684.2L68.5,677.7L110.2,683.5L106.4,690zM66.6,672L72,664.1L111.9,677.7L106.4,685.6zM82.3,642.3L88.6,635.1L128.1,651.7L121.8,658.9zM98.3,613.5L104.6,606.3L143.3,624.6L136.9,631.9zM103.4,607.1L108.6,601.8L147,620L141.7,625.3zM118.5,578.7L123.7,573.4L162.7,592.3L157.5,597.6zM133.7,552.2L138.9,546.9L178.9,563.1L173.6,568.4zM136.2,544.4L142.5,537.2L181.7,553.3L175.4,560.6zM152.3,515.9L158.6,508.6L197.8,526.6L191.5,533.8zM167.4,488.8L173.7,481.5L212.6,497.1L206.2,504.4zM172.5,482.4L177.8,477.1L216.3,492.4L211,497.8zM188,454.5L193.2,449.1L232.9,465L227.7,470.4zM204,426.3L209.3,421L248.2,437.4L243,442.7zM206.5,418.1L212.8,410.8L251.3,428.2L245,435.4zM222.4,390.6L228.7,383.4L267.3,400.2L261,407.5zM237.9,361.7L244.2,354.4L282.6,373.2L276.3,380.4zM243,355.3L248.3,349.9L286.4,368.5L281.1,373.8zM257.8,328.8L263.1,323.5L302.9,339.2L297.7,344.5zM274.6,300L279.9,294.7L316.8,311.9L311.5,317.2zM276.8,292L283.1,284.7L321.3,303.1L315,310.4z" fill="#313a5c" stroke="#1a2140" stroke-width=".9" stroke-linejoin="round"/><g filter="url(#bl)" fill="none" stroke-linecap="round"><path d="M 347 466 L 196.5 727 A 59 59 0 0 1 93.5 669 L 307 284" stroke="#3a466c" stroke-width="26.0" stroke-opacity=".3" stroke-linejoin="round" stroke-linecap="butt"/><path d="M 347 466 L 196.5 727 A 59 59 0 0 1 93.5 669 L 307 284" stroke="#4a577f" stroke-width="12.6" stroke-opacity=".3" stroke-linejoin="round" stroke-linecap="butt"/><path d="M355.9,469.9L333.5,459.5M354,478L331.8,467.7M352.4,486.7L330,475.5M343.4,490.7L321.1,479.6M341.3,498.7L319.1,487.7M335.4,504.5L313.4,493.7M333.9,512L310.9,502.4M330.3,519.1L307.4,509.6M328,526.9L305.8,518M320.6,531.9L298.6,523.1M319.6,541L297,530.9M315.6,547.9L293.2,537.9M310.3,554.6L288.4,543.9M303.9,560.1L282.2,549.5M304.7,568.9L281.9,559.5M301.1,576L278.4,566.8M296.1,583.5L274.4,572.5M290.3,589.4L268.8,578.5M284.4,594.8L262.3,584.4M279.2,601L257.3,590.7M281,611L258.1,600.7M276.9,617.9L254.2,607.7M267.7,621.6L245.1,611.8M268.5,631.3L246,621.6M264,637.9L241.2,628.1M255.4,642.2L232.7,632.4M252.1,649.5L229.8,639.9M248.4,656.6L226.2,647.1M248,665.4L224.6,655.7M241.4,670.8L218.2,661.2M237.4,678.4L214.3,667.5M232.3,684.6L209.4,673.9M230.3,692.8L207.8,682.1M225.4,699.2L203.1,688.7M220.5,704.7L197.7,695.6M216.7,711.8L194.1,702.7M215.1,720.6L192.4,710.5M208.1,725.8L185.6,715.8M205.4,734.6L184,722.8M199.9,742.4L180.4,728M193.8,749.1L175.5,732.7M184.8,752.9L169,734.3M178,760.1L165.5,739.7M170.1,766.2L160.5,744.6M160.9,768L153.3,744.4M151.1,765.7L146.7,741.5M141.1,769.9L141.1,745.3M132.1,765.5L135.4,741.3M122.3,765.9L128.8,741.3M113,763.1L122.6,739.8M107,755.6L118.2,733.9M99.5,750L113.3,730.2M89.7,745L107.8,727.9M83.6,737.3L103.6,722.9M80.4,728.5L101.4,716.2M76.5,719.7L98.7,710.3M71.1,710.5L95.9,704.4M70.6,700.4L95.8,697.7M73.7,691L98.3,691M74.3,681.2L98.5,684.5M77.8,671.3L100.9,679.2M80,661.7L101.9,672.1M83.3,654.3L105.6,665M91.3,649.6L113.4,660.2M95.6,643.5L118.5,653.2M101.1,637.4L123.7,647M99.5,627.2L122,637.1M103.1,620.1L125.4,629.8M108.2,613.3L130.6,624M113.2,607L135.4,617.5M118.3,601.3L141.3,611M120.8,593.5L143.5,603.2M127.3,587.3L150.1,598.4M130.7,580L153.3,591M135.3,574.1L157.6,583.5M136.7,565.8L158.9,575.1M142.7,560.2L166.1,569.7M144.5,552L167.6,561.4M149.7,545.7L172.4,555.1M153.2,538.5L175.8,547.8M158.2,532.4L181.3,541.4M162.8,525.8L185.6,534.7M166.1,517.7L188.8,528.1M170.3,510.9L192.9,521.2M171.8,502.7L193.9,512.5M177.7,496.9L199.5,506.5M176.4,487.5L198.9,496.5M185.3,483.3L207.6,492.2M184.9,473.9L207.4,483M189.5,467.3L211.8,476.3M195.5,461.6L218.7,470.9M201.6,455.8L224.6,465M201,445.3L223.5,456.3M207.3,439.7L229.7,450.6M210.3,433L233.2,442.6M216.8,427.4L239.4,436.9M219.9,419.7L242.3,429.7M224.8,413.2L247,423.2M225.8,405.4L249,414.4M230.6,399L253.6,407.8M234.2,391.2L256.6,401M235.4,382.7L257.6,392.4M242.5,377.4L265.5,387.7M245.7,370L268.5,380.2M249.3,362.5L271.7,373.3M253.2,355.4L275.3,366.2M256.2,348.2L279.3,359M258.7,340.5L281.7,351.2M264.1,335.2L287.4,344.4M267.7,328.1L290.8,337.1M270,320.2L292.9,329.1M278.4,315.7L301.1,324.5M281.6,307.4L303.2,317.5M284,299.6L305.4,309.6M289.3,293.3L311.5,304M290.4,284.7L312.3,295.3M295.7,278.7L317.8,289.1" stroke="#5b6990" stroke-width="3.5" stroke-opacity=".72"/><path d="M350.3,467.3L338.7,461.9M348.7,475.6L337.3,470.3M346.9,483.9L335.3,478.2M338.2,488.1L326.7,482.4M335.7,495.9L324.2,490.2M330.1,501.9L318.8,496.3M328.4,509.7L316.5,504.7M325.1,517L313.3,512.1M322.5,524.7L311,520.1M315.4,529.8L304,525.3M314.2,538.6L302.4,533.3M310.5,545.7L298.9,540.5M304.7,551.8L293.4,546.3M298.7,557.6L287.4,552.1M299,566.5L287.2,561.6M295.7,573.8L284,569M290.7,580.8L279.5,575.1M285.3,586.9L274.1,581.2M278.8,592.2L267.4,586.8M273.9,598.6L262.6,593.3M275.3,608.4L263.5,603.1M271.6,615.5L259.8,610.2M262.3,619.3L250.6,614.2M263.4,629.2L251.8,624.1M258.3,635.5L246.5,630.3M250,639.9L238.3,634.8M246.7,647.2L235.1,642.2M243.3,654.5L231.8,649.5M242.3,663L230.2,657.9M236,668.6L224,663.6M231.7,675.6L219.7,670M226.9,682.1L215,676.6M224.7,690.1L213.1,684.6M220.2,696.7L208.7,691.3M215,702.5L203.2,697.8M211.5,709.7L199.8,705.1M209.5,718.1L197.8,712.9M202.9,723.5L191.3,718.3M200.2,731.8L189.1,725.7M195.5,739.2L185.4,731.7M189.4,745.1L179.9,736.6M181.2,748.7L173,739M174.9,754.9L168.4,744.4M167.8,761.1L162.9,749.9M159.1,762.3L155.1,750.1M150.1,760.2L147.8,747.7M141.1,763.9L141.1,751.1M132.8,759.9L134.5,747.4M124,759.8L127.3,747.1M115.2,757.6L120.2,745.5M109.7,750.3L115.5,739.1M102.6,745.4L109.8,735.2M94.4,740.6L103.7,731.8M88.4,733.8L98.8,726.4M85.5,725.5L96.4,719.1M81.6,717.5L93.1,712.7M77.2,709L90.1,705.9M76.5,699.8L89.5,698.4M80,691L92.8,691.1M80.2,682L92.7,683.7M83.7,673.3L95.6,677.4M85.3,664.2L96.6,669.6M89,657.1L100.5,662.6M96.6,652.2L108,657.6M101.2,645.9L113,650.9M106.3,639.6L118.1,644.6M105.2,629.7L116.8,634.9M108.5,622.4L120,627.5M113.7,616L125.3,621.5M118.4,609.4L129.9,614.9M124.1,603.7L135.9,608.8M126.2,595.8L137.9,600.8M133,590L144.8,595.8M136,582.6L147.7,588.2M140.7,576.4L152.3,581.3M141.8,567.9L153.3,572.7M148.4,562.5L160.5,567.5M149.9,554.2L161.8,559.1M155.4,548.1L167.2,552.9M158.6,540.7L170.3,545.5M164,534.7L176,539.4M168.3,527.9L180.1,532.5M171.6,520.2L183.4,525.6M175.6,513.3L187.2,518.6M177.3,505.2L188.7,510.2M182.9,499.1L194.2,504.1M182.1,489.8L193.7,494.5M190.6,485.4L202.2,490M190.4,476.1L202.1,480.8M194.7,469.4L206.2,474M201.2,463.9L213.2,468.7M207,457.9L218.9,462.7M206.4,448L218.1,453.7M212.5,442.2L224.1,447.8M215.9,435.3L227.7,440.3M222,429.6L233.7,434.5M225.5,422.2L237.1,427.4M230.1,415.6L241.5,420.7M231.4,407.6L243.4,412.2M235.9,400.9L247.8,405.5M239.7,393.6L251.3,398.7M240.6,384.9L252.1,389.9M248.3,380L260.2,385.4M251.1,372.5L262.9,377.7M254.8,365.1L266.4,370.8M258.3,357.9L269.8,363.5M261.9,350.9L273.9,356.5M264.1,343L276,348.5M269.8,337.4L281.8,342.2M273.1,330.1L285,334.8M275.6,322.4L287.4,327M283.6,317.7L295.4,322.3M286.9,309.9L298.1,315.1M289,301.9L300.1,307.1M294.8,295.9L306.2,301.4M295.4,287.1L306.8,292.6M301.3,281.3L312.7,286.7" stroke="#8d9cc0" stroke-width="2.6" stroke-opacity=".75"/></g><path d="M361.6,478L326.6,466.8M353.4,492.3L318.2,479.8M345.7,506.3L311,494.1M337.6,518.5L301.4,508.6M329.5,532.1L294.5,523.3M321.4,546.7L285.9,535.9M313.7,561.6L279.3,549.7M306.2,574.2L270.3,564.6M296.9,589.2L263,576.8M289.6,602.8L255.1,591.5M282,616.3L246.1,605.3M273.3,629.5L237.8,619.1M266.1,643.7L230.3,633.4M257.4,657.1L222.2,647.2M250.4,671.2L213.7,661.2M242.2,686L206.1,674.1M233.8,699.7L198.5,688.1M225.7,712.1L189.9,703M217.8,726.9L182.2,716M208.4,741.9L174.7,728.2M195.2,756.7L165,735.8M177.3,768.2L155,740.5M158.1,774L142.3,740.4M136.4,775L131.9,738.6M116.1,770.8L121.4,733.1M99.2,760L111.7,725.5M82.4,745.3L106.2,716.9M73.5,727.2L102.4,704.9M67.3,706.8L103,693.4M67.6,686.3L104.3,681.7M74.2,665L109.7,672.5M82.8,649L117.6,660.8M90.6,636.2L126.4,646.2M98.2,621.7L133.4,632.2M106.5,607.4L141.6,619.1M113.6,594L149.5,604.2M121.7,579L157.2,591.5M129.8,566.5L164.9,576.2M136.8,552.5L173.4,562.2M144.5,538.3L180.2,547.9M152,524.6L188.1,533.6M160.6,509.7L196.1,521.1M168.5,496.1L203,506.3M175.7,482.6L211,491.7M183.9,468.9L219.2,478M191.1,454.7L227.5,464.2M199.6,439.4L234.8,451.7M207.1,426.6L242.8,436.6M214.8,411.9L249.8,422.7M222.4,399.2L258.8,408.1M230.6,384.5L265.7,394.7M237.5,369.7L273.3,380.9M246.2,355.5L281,367.7M253.1,341.5L289.2,353.5M260.9,329.1L297.4,338.3M269,315.3L305,324.2M277.6,300.2L311.5,311.1M285.1,285.8L319.7,297.6M292.5,271.9L327,283.2" fill="none" stroke="#1c2340" stroke-width="1.1" stroke-opacity=".38" filter="url(#bs)"/><path d="M 447 196 C 451 225 451 250 448 292" fill="none" stroke-linejoin="round" stroke-linecap="butt" stroke="#262e4d" stroke-width="29"/><path d="M464.7,187.8L464,197.4L430.6,204.6L431.3,195zM468.6,221.8L467,231.3L431.9,234.6L433.5,225.1zM469.7,255.5L467.3,264.8L431.3,265.1L433.6,255.8zM468,263.8L465.6,270.9L430,270.7L432.4,263.6z" fill="#272f4c" stroke="#1a2140" stroke-width=".9" stroke-linejoin="round"/><path d="M466.5,204.1L465.3,213.7L431.7,220.3L432.8,210.7zM465.9,212.8L464.4,220.1L430.9,225.8L432.5,218.5zM468.3,246.9L466.1,254.1L431.7,255.6L433.8,248.5zM465.9,278.7L463.4,285.7L430.4,287.9L432.8,280.8zM466.5,287L463.9,296.2L430.1,297.6L432.8,288.4z" fill="#2c3555" stroke="#1a2140" stroke-width=".9" stroke-linejoin="round"/><path d="M464.5,196.4L463.4,203.8L430.2,210.3L431.4,202.9zM467.6,230.4L465.7,237.6L430.9,240.1L432.8,232.9zM469.7,238.5L467.6,247.9L432.8,250L434.9,240.6zM467.8,270.5L465.2,279.8L431.8,282.2L434.3,272.9z" fill="#313a5c" stroke="#1a2140" stroke-width=".9" stroke-linejoin="round"/><g filter="url(#bl)" fill="none" stroke-linecap="round"><path d="M 447 196 C 451 225 451 250 448 292" stroke="#3a466c" stroke-width="21.1" stroke-opacity=".3" stroke-linejoin="round" stroke-linecap="butt"/><path d="M 447 196 C 451 225 451 250 448 292" stroke="#4a577f" stroke-width="10.2" stroke-opacity=".3" stroke-linejoin="round" stroke-linecap="butt"/><path d="M456.9,193.9L437.5,198.1M459.1,201.9L439.9,205.7M458.5,210L439,213.8M456.7,218.4L437.3,221.7M459,227L438.6,228.9M458,235.2L437.8,236.7M458.6,243.3L438.4,244.6M461.5,251.6L441.5,252.4M462.1,260L441.2,260.1M458.3,268L437.6,267.9M459.6,275.4L440.2,276.7M456.3,283.2L437.1,284.5M460.6,291.8L441,292.6" stroke="#5b6990" stroke-width="3.5" stroke-opacity=".72"/><path d="M452,194.9L442,197.1M454.7,202.8L444.7,204.7M453.8,210.9L443.7,212.9M452.3,219.2L442.2,220.9M453.9,227.5L443.4,228.5M453.4,235.6L442.9,236.4M453.4,243.6L443,244.3M456.7,251.8L446.4,252.2M456.8,260L446,260.1M453.4,268L442.7,267.9M454.7,275.7L444.7,276.4M451.8,283.6L441.9,284.2M455.8,292L445.7,292.4" stroke="#8d9cc0" stroke-width="2.6" stroke-opacity=".75"/></g><path d="M462.4,197.6L434.6,208.1M463.7,213.8L435.5,223.9M465.3,231.3L435.6,238.5M465.9,247.9L436.3,254M465.5,264.8L434.8,269.2M463.6,279.7L434.9,286.4M462.3,296.1L433.3,301.9" fill="none" stroke="#1c2340" stroke-width="1.1" stroke-opacity=".38" filter="url(#bs)"/><path d="M 321 290 L 288 296 L 89.5 296 A 57.25 57.25 0 0 1 89.5 181.5 L 600 182 C 736 182 847 309 847 465 C 847 626 736 758 600 758 L 392 758 A 50 50 0 0 1 342 708 L 342 462" fill="none" stroke-linejoin="round" stroke-linecap="butt" stroke="#262e4d" stroke-width="36"/><path d="M312.3,313.7L302.7,313.4L329.1,266.7L338.8,267zM290.4,317.5L280.8,317.2L288.3,275.2L297.9,275.5zM259.1,319.2L249.7,317.2L255.3,274.1L264.7,276.1zM251,317.8L243.8,315.8L249.4,273.1L256.6,275.1zM218.9,316.8L211.7,314.8L217.6,273.7L224.8,275.7zM186.9,316.3L179.7,314.3L185.6,273.9L192.8,275.9zM180.2,318.7L170.8,316.7L174.3,274.3L183.7,276.3zM148.5,318.7L139.1,316.7L141.9,274.4L151.3,276.4zM115.6,318.7L106.2,316.7L110.8,275.7L120.2,277.7zM107.5,317.3L100.3,315.3L104.9,274.7L112.1,276.7zM70.4,314.9L64,311L78.5,272.5L84.9,276.4zM32.5,293.5L29.1,286.8L62,262L65.3,268.7zM24.7,284.6L21.1,275.7L57.5,257.4L61.1,266.3zM10,244.1L11.6,234.7L54.2,236.7L52.5,246.1zM19.5,200.9L26,193.8L59.2,217.8L52.7,224.9zM26.6,192.4L32.6,187.9L61.9,216L55.9,220.4zM60.8,166.4L68.2,165.9L78.6,205.6L71.1,206.2zM98.6,160.2L105.8,162.2L103.3,203.4L96.1,201.4zM108.1,158.3L117.5,160.3L111.8,203.4L102.4,201.4zM138.3,158.8L147.7,160.9L145.6,202.6L136.2,200.6zM171.4,159.2L180.8,161.2L176.5,202L167.1,200zM179.5,160.6L186.7,162.6L182.4,203L175.2,201zM210.9,159.8L218.1,161.8L215,204.5L207.8,202.5zM243.2,160.4L250.4,162.4L246.7,203.9L239.5,201.9zM250.3,159.9L259.7,161.9L257.6,202.3L248.2,200.3zM284.1,160.1L293.5,162.1L287.8,202.9L278.4,200.9zM314.6,159.7L324,161.7L321.3,203.3L311.9,201.3zM322.7,161.1L329.9,163.1L327.2,204.3L320,202.3zM355.6,161.3L362.8,163.3L358.3,204.4L351.1,202.4zM386.6,161.1L393.8,163.1L391.3,203.2L384.1,201.2zM394.9,159.4L404.3,161.4L401,202.9L391.6,200.9zM427.7,159.1L437.1,161.1L432.2,203.3L422.8,201.3zM458.5,158.8L467.9,160.8L465.5,203.8L456.1,201.8zM466.6,160.2L473.8,162.2L471.4,204.8L464.2,202.8zM499.7,161.5L506.9,163.5L502.3,203.8L495.1,201.7zM532.1,160.4L539.3,162.4L533.9,204.1L526.7,202.1zM539.3,160L548.7,162L544.7,202.2L535.3,200.2zM572.2,159.2L581.6,161.2L575.8,202.3L566.4,200.3zM603.3,160.2L612.7,162.4L608.7,202.8L599.3,200.5zM612.1,161.9L619.2,164.3L613.8,204.1L606.7,201.6zM647.1,165.7L653.7,169.2L642,209.1L635.3,205.6zM681.2,174.6L687.2,179L669.2,217.7L663.1,213.3zM690.2,176.7L698.1,182.2L678.1,219.1L670.2,213.7zM721.9,193.3L729,199.7L702.8,232.9L695.8,226.5zM751.2,212.3L757.4,219.7L726.8,249.4L720.6,242.1zM757.2,218.9L761.5,225L730.2,253.5L725.9,247.3zM781.8,242.8L785.2,249.4L752.4,272.9L748.9,266.3zM804.5,267.7L807.2,274.7L771.6,296.2L768.9,289.3zM809.2,273.8L812.9,282.7L778.8,303.8L775,294.9zM828,303.7L830.8,313L793.6,328.4L790.9,319.2zM843,334.6L844.7,344L804.7,356.2L803,346.7zM844.9,343.1L845.6,350.5L805.7,361.5L805,354.1zM856.4,374.7L856.3,382.1L814.8,390.3L814.9,382.9zM863.5,409.1L862.7,416.6L820.6,418.4L821.5,411zM866.6,416.2L865.9,425.7L824.5,428.5L825.2,419zM868.3,451.1L866.6,460.5L826.2,457.7L827.9,448.3zM869.3,486.1L866.7,495.4L824.9,486.8L827.5,477.5zM867.3,494.5L864.7,501.6L823.5,492.1L826.1,485.1zM863.2,527.1L859.9,533.8L820.2,523.1L823.4,516.4zM854.9,559.9L851,566.2L813.3,552.5L817.2,546.1zM854.2,569.3L849.6,577.7L810.9,560.9L815.5,552.5zM842.7,600.9L837.2,608.8L800.1,589.3L805.5,581.4zM828.2,631.8L821.9,639.1L787.3,616.4L793.6,609.1zM822.8,638.7L817.4,643.9L783.8,620.4L789.1,615.2zM804.8,667.6L798.9,672.2L766.6,644.9L772.5,640.3zM782.7,693.9L776.3,697.8L748.4,667.9L754.8,664zM777.7,700.7L769.7,706L742,675.3L750.1,670zM751.7,725.8L743.1,730L720.9,693.5L729.5,689.3zM723,745L713.9,748.1L696.4,709.8L705.5,706.7zM714.6,748.3L707.4,750L691.4,711.4L698.7,709.7zM684.2,763.1L676.8,763.8L664.7,724.8L672.1,724.2zM650.3,772.9L642.9,772.4L637.1,732.1L644.5,732.5zM640.7,775.9L631.1,775.5L629.6,735.4L639.2,735.8zM605.3,780.4L595.9,778.6L601.1,736.4L610.6,738.2zM573.6,779.9L564.2,777.9L568.9,736.8L578.3,738.8zM565.5,778.5L558.3,776.5L563,735.8L570.2,737.8zM534.2,778.7L527,776.7L530.2,735.7L537.4,737.7zM502.6,778.8L495.4,776.8L497.8,735.8L505,737.8zM493.5,780.2L484.1,778.2L488.9,736.2L498.3,738.2zM461.1,780.5L451.7,778.5L457.3,737.7L466.7,739.7zM429.4,780L420,778L425,737.1L434.4,739.1zM421.3,778.6L414.1,776.6L419.1,736.1L426.3,738.1zM388.1,778.3L381.1,775.7L388.5,735.3L395.5,737.9zM346.5,761.8L342.4,755.5L372.7,728.7L376.8,735zM336.7,755.5L332.3,746.9L367.7,724.2L372,732.7zM319,712.8L320.6,703.3L363,706.8L361.4,716.3zM320.3,681.4L322.3,672L363.8,674L361.8,683.4zM321.7,673.3L323.7,666.1L364.8,668.1L362.8,675.3zM321.4,641.1L323.4,633.9L364.8,636.4L362.8,643.6zM321.4,607.7L323.4,600.5L364.5,605.7L362.5,612.9zM319.4,600.2L321.4,590.8L363.6,595.3L361.6,604.7zM320.1,567.6L322.1,558.2L363.4,563.8L361.4,573.2zM320.1,535.6L322.1,526.2L363.6,531.8L361.6,541.2zM321.5,527.5L323.5,520.3L364.6,525.9L362.6,533.1zM320.2,496.2L322.2,489L363.3,493.2L361.3,500.4zM321.4,464.9L323.4,457.7L364.4,460.5L362.4,467.7z" fill="#272f4c" stroke="#1a2140" stroke-width=".9" stroke-linejoin="round"/><path d="M301.7,316.2L292.1,315.9L308.3,270.4L317.9,270.7zM296.3,315.7L288.9,315.1L299.5,271L307,271.6zM267.2,317L260,315L265.3,274.5L272.5,276.5zM235.5,316.8L228.3,314.8L233,273.4L240.2,275.4zM227,318.2L217.6,316.2L223.5,274.7L232.9,276.7zM195,317.7L185.6,315.7L191.5,274.9L200.9,276.9zM164.5,318.3L155.1,316.3L157.9,274L167.3,276zM156.4,316.9L149.2,314.9L152,273L159.2,275zM124.3,317.6L117.1,315.6L120.1,273.5L127.3,275.5zM92,316.6L84.8,314.6L88.4,273.6L95.6,275.7zM81.1,318.2L72.1,314.9L81.1,274.4L90.1,277.7zM39.8,302L33.9,294.4L63.2,265L69.1,272.6zM15,265.5L14,256L54.8,246.7L55.8,256.3zM13.4,254.5L14.1,247.1L55.4,243.7L54.7,251.2zM16.4,210.6L20.9,204.7L57.3,225.7L52.8,231.6zM41.3,176.2L48.3,173.6L69.6,209.6L62.6,212.2zM50.2,170L59.5,167.3L75.5,205.6L66.2,208.2zM90.5,158.7L99.9,160.8L97.4,202.4L88,200.4zM123.8,159.3L133.2,161.3L128.1,203.5L118.7,201.5zM131.9,160.7L139.1,162.7L134,204.5L126.8,202.5zM163.5,161.4L170.6,163.4L166.4,203.9L159.2,201.9zM195.5,161.1L202.7,163.1L198.4,203.9L191.2,201.8zM202.8,158.4L212.2,160.4L209.1,203.5L199.7,201.5zM235.1,159L244.5,161L240.8,202.9L231.4,200.9zM267.7,160.2L277.1,162.2L272.2,202L262.8,200zM275.8,161.6L283,163.6L278.1,203L270.9,201zM307.6,160.7L314.8,162.7L310.3,204.1L303.1,202zM338.8,160.3L346,162.3L343.1,204.1L335.9,202.1zM347.6,159.9L356.9,161.9L352.4,203.4L343,201.4zM378.5,159.7L387.9,161.7L385.4,202.2L376,200.2zM411,160.3L420.4,162.3L417,202.4L407.6,200.4zM419.1,161.7L426.3,163.7L422.9,203.4L415.7,201.4zM452.2,160.5L459.4,162.6L453.8,203.7L446.6,201.7zM483.6,161.3L490.8,163.3L486.4,203.7L479.2,201.7zM491.6,160L501,162.1L496.4,202.7L487,200.7zM524,159L533.4,161L528,203.1L518.6,201.1zM554.7,158.8L564.1,160.8L561.3,203.3L551.9,201.3zM562.8,160.2L570,162.2L567.2,204.3L560,202.3zM596.1,161.8L603.3,163.9L597.9,204.3L590.7,202.3zM629.2,163.1L636.1,166L628.4,205.9L621.6,202.9zM638.6,162.7L647.5,166.3L637.2,207L628.2,203.4zM673.2,170.4L681.5,175.3L664.7,214.9L656.4,210.1zM706.9,183.8L714.4,189.8L690.8,225L683.3,219.1zM714.1,189.1L719.5,194.3L694.9,228.4L689.6,223.2zM743.3,208L748,213.9L719.1,244.5L714.4,238.7zM768.8,229.9L772.7,236.3L742.9,263.2L739,256.8zM776.7,235.6L781.9,243.6L749.5,268.4L744.3,260.3zM800.3,259.9L804.5,268.6L769.2,291.4L765,282.8zM820,289L823.2,298L785.3,315.6L782.1,306.6zM823.3,297.1L825.2,304.4L787.1,320.7L785.3,313.5zM839.4,327.7L840.4,335.1L800.2,347L799.2,339.6zM850.9,359.9L851.2,367.3L810.9,374.6L810.6,367.2zM855.4,366L856.1,375.5L814.4,384.9L813.7,375.3zM863.4,400.4L863.1,410L820.8,412.9L821,403.3zM867.9,433.2L866.7,442.8L825.8,443.5L827,433.9zM867.2,441.9L865.6,449.3L825.1,448.9L826.7,441.6zM868.1,476.8L865.8,483.9L825.4,478L827.6,470.9zM864.6,510.5L861.7,517.3L821.9,507.9L824.9,501zM865.9,518.8L862.5,527.8L822.1,518L825.5,509zM858.4,551.9L854.2,560.5L815.7,547.5L820,538.9zM848.4,584.6L843.4,592.8L806.8,576.1L811.9,567.9zM844.1,592.2L839.6,598.2L804,580.7L808.4,574.7zM830.2,623.9L825.1,629.4L791.8,607.4L796.9,601.9zM813.6,653.7L808,658.6L776.5,632.8L782.1,627.9zM811,661.2L804,667.8L770.5,641.2L777.5,634.6zM789.5,688.3L781.8,694.1L752.7,664.8L760.4,659zM765.5,713.5L757.1,718.3L732.3,685.8L740.6,681zM758,718.2L751.2,721.4L727.6,688.5L734.4,685.4zM729.2,739.2L722.1,741.4L704.9,705.2L712,703zM700.6,756.8L693.2,758L678.2,719.6L685.5,718.4zM692.9,761L683.5,762.8L669.9,724L679.3,722.2zM659.3,772.1L649.7,772.5L642.3,732L651.9,731.6zM624.3,779.3L614.8,778.2L614.2,736.7L623.8,737.9zM615.3,778.7L608,777.1L609.1,736L616.4,737.6zM582,778.3L574.8,776.3L578.5,736.1L585.7,738.1zM550.7,779.2L543.5,777.2L545.7,736.5L552.9,738.5zM542.3,780.1L532.9,778.1L536.1,736.7L545.5,738.7zM510.7,780.2L501.3,778.2L503.7,736.8L513.1,738.8zM478.1,781L468.7,779L472.3,736.5L481.7,738.5zM470,779.6L462.8,777.6L466.4,735.5L473.6,737.5zM438.2,778.7L431,776.7L434.2,736.7L441.4,738.7zM406.5,779.7L399.3,777.7L401.9,735.6L409.1,737.6zM398,779.8L388.6,777.8L392.4,736.5L401.8,738.5zM354.9,769.6L348.1,762.8L374,731.2L380.8,738zM325.8,735.1L324.4,725.6L364.7,715.5L366.1,725zM323.7,723.8L324.2,716.4L365.3,712.9L364.7,720.4zM320.4,689L322.4,681.8L363.6,684.5L361.6,691.7zM321.7,655.4L323.7,648.2L364.8,654L362.8,661.2zM320,649.2L322,639.8L363.8,642.3L361.8,651.7zM320,615.8L322,606.4L363.5,611.6L361.5,621zM319.5,584L321.5,574.6L362.6,579.4L360.6,588.8zM320.9,575.9L322.9,568.7L363.6,573.5L361.6,580.7zM321,543.4L323,536.2L364.2,542L362.2,549.2zM321.6,512.4L323.6,505.2L363.7,509L361.7,516.2zM318.8,504.3L320.8,494.9L362.3,499.1L360.3,508.5zM320,473L322,463.6L363.4,466.4L361.4,475.8z" fill="#2c3555" stroke="#1a2140" stroke-width=".9" stroke-linejoin="round"/><path d="M307.1,313.2L299.6,312.5L320.2,267.4L327.6,268zM280.9,316.1L273.7,314.1L283.6,274.6L290.8,276.6zM275.3,318.4L265.9,316.4L271.2,275.5L280.6,277.5zM243.6,318.2L234.2,316.2L238.9,274.4L248.3,276.4zM212.4,317.7L203,315.7L206,275L215.4,277zM204.3,316.3L197.1,314.3L200.1,274L207.3,276zM172.1,317.3L164.9,315.3L168.4,273.3L175.6,275.3zM140.4,317.3L133.2,315.3L136,273.4L143.2,275.4zM132.5,319L123.1,317L126,274.5L135.4,276.5zM100.2,318L90.8,316L94.3,274.7L103.7,276.7zM59.6,312.3L51.9,306.7L72.2,269.6L79.9,275.3zM50.3,306.2L45.3,300.7L70.4,267.2L75.4,272.7zM20.1,274.4L18.8,267.1L57,254.2L58.4,261.6zM11.4,233.1L14.1,226.1L55.6,233.9L52.8,240.9zM11.8,220.8L16,212.2L55.4,228L51.2,236.7zM32,182.6L40.2,177.5L66.5,210.5L58.4,215.6zM71.4,161.6L81,161.7L84.3,202L74.7,202zM82.5,161.3L89.8,162.8L87.4,202.8L80.1,201.3zM116.2,159.7L123.4,161.8L117.7,204.4L110.5,202.4zM146.4,160.3L153.6,162.3L151.5,203.6L144.3,201.6zM155.4,160L164.7,162L160.5,202.9L151.1,200.9zM187.4,159.7L196.8,161.7L192.5,202.8L183.1,200.8zM219,158.6L228.4,160.6L224.9,203.2L215.5,201.2zM227.1,160L234.3,162L230.8,204.3L223.6,202.2zM258.4,161.3L265.6,163.3L263.5,203.3L256.3,201.3zM292.2,161.5L299.4,163.5L293.7,203.9L286.5,201.9zM299.5,159.3L308.9,161.3L304.4,203L295,201zM330.7,158.9L340.1,160.9L337.2,203.1L327.8,201.1zM362.8,159.8L372.2,161.8L369.1,203L359.7,201zM370.9,161.2L378.1,163.2L375,204L367.8,202zM403,160.8L410.2,162.8L406.9,203.9L399.7,201.9zM435.8,160.5L443,162.5L438.1,204.3L430.9,202.3zM444.1,159.1L453.5,161.1L447.9,202.7L438.5,200.7zM475.5,159.9L484.9,161.9L480.5,202.7L471.1,200.6zM507.2,159.8L516.6,161.8L512.8,202.5L503.4,200.5zM515.3,161.2L522.5,163.2L518.7,203.5L511.5,201.5zM547.4,161.4L554.6,163.4L550.6,203.2L543.4,201.2zM580.3,160.6L587.5,162.6L581.7,203.3L574.5,201.3zM588,160.4L597.4,162.4L592,203.3L582.6,201.3zM620.6,160.8L629.7,163.7L623.5,204.2L614.4,201.3zM655.8,165.7L664.4,169.9L651.5,210.3L642.9,206zM664,169.2L670.4,173.2L656.1,212.7L649.8,208.7zM697.8,181.5L703.5,186.3L682.4,222.2L676.7,217.4zM728.7,199L733.8,204.5L706.7,236.5L701.7,231zM736.9,201.9L743.5,208.8L715.5,240.7L708.8,233.7zM763.2,223L768.9,230.7L739.8,258.9L734.1,251.1zM788.7,247.2L793.4,255.6L759.2,280.4L754.5,272zM793.3,254.7L796.4,261.5L761.8,285.1L758.7,278.2zM813,281.8L815.3,288.9L780.8,308.8L778.6,301.6zM830.9,312.1L832.4,319.4L795.2,333.7L793.7,326.3zM837,319.2L839.2,328.6L799,341.7L796.8,332.3zM849.5,351.2L850.7,360.8L810.2,369.2L808.9,359.7zM859.9,383.2L860.1,392.8L819.2,398.4L819,388.8zM860.5,392L860,399.4L819.4,403.8L819.8,396.4zM866.3,424.9L865.1,432.3L824.1,434L825.3,426.6zM867.1,459.7L865.2,466.9L825.2,463.1L827.2,455.9zM869.6,468.2L867.5,477.6L826.5,472.6L828.7,463.3zM867,502.1L864,511.2L823.6,502.7L826.6,493.5zM862.4,536.1L858.6,544.9L819.3,532.1L823.1,523.3zM859.3,544.2L855.7,550.8L817.1,537.2L820.7,530.6zM850.3,577.1L846.1,583.3L808.2,565.7L812.4,559.5zM838,608.3L833.3,614L797,593.8L801.7,588zM835.2,616.7L829.4,624.3L795.1,603L801,595.4zM819.4,647.1L812.7,654.1L780.2,628.9L786.9,621.9zM799.3,675.2L792,681.4L763.1,653L770.5,646.8zM792.8,681.2L786.7,685.4L759,656.5L765.1,652.2zM770.6,705.9L764,709.4L737.5,678.2L744.1,674.6zM743.9,730L736.9,732.7L716.2,695.8L723.1,693.2zM737.3,735.4L728.4,739.1L709.8,703.2L718.7,699.5zM709.2,754.1L699.9,756.6L683.3,718.4L692.6,715.9zM676.4,767.6L666.8,768.6L656.4,729L666,727.9zM667.5,769L660,769.1L651.2,729.5L658.7,729.4zM631.7,775.9L624.3,774.9L624.4,735.2L631.8,736.2zM596.9,779.1L589.7,777.1L595.6,735.4L602.8,737.4zM590.1,779.7L580.7,777.7L584.4,737.1L593.8,739.1zM558.8,780.6L549.4,778.6L551.6,737.5L561,739.5zM526.6,780.3L517.2,778.3L519.8,736L529.2,738zM518.5,778.9L511.3,776.9L513.9,735L521.1,737zM485.4,778.8L478.2,776.8L483,735.2L490.2,737.2zM453,779.1L445.8,777.1L451.4,736.7L458.6,738.7zM446.3,780.1L436.9,778.1L440.1,737.7L449.5,739.7zM414.6,781.1L405.2,779.1L407.8,736.6L417.2,738.6zM376.4,779.2L367.8,774.9L381.7,735.9L390.3,740.2zM365.7,774.5L359.9,769.7L379.7,733.8L385.5,738.5zM331,745.3L329.2,738.1L367.3,721.4L369.2,728.7zM320.2,703.7L322.2,696.5L364.1,701.7L362.1,708.9zM319,697.1L321,687.7L362.6,690.4L360.6,699.8zM320.3,663.5L322.3,654.1L363.8,659.9L361.8,669.3zM319.3,632.3L321.3,622.9L363.9,627.1L361.9,636.5zM320.7,624.2L322.7,617L364.9,621.2L362.9,628.4zM320.8,592.1L322.8,584.9L364.6,589.4L362.6,596.6zM321.5,559.5L323.5,552.3L364.4,557.9L362.4,565.1zM319.6,551.5L321.6,542.1L363.2,547.9L361.2,557.3zM320.2,520.5L322.2,511.1L362.7,514.9L360.7,524.3zM318.9,487.8L320.9,478.4L363.1,483.6L361.1,493zM320.3,479.7L322.3,472.5L364.1,477.7L362.1,484.9z" fill="#313a5c" stroke="#1a2140" stroke-width=".9" stroke-linejoin="round"/><g filter="url(#bl)" fill="none" stroke-linecap="round"><path d="M 321 290 L 288 296 L 89.5 296 A 57.25 57.25 0 0 1 89.5 181.5 L 600 182 C 736 182 847 309 847 465 C 847 626 736 758 600 758 L 392 758 A 50 50 0 0 1 342 708 L 342 462" stroke="#3a466c" stroke-width="25.4" stroke-opacity=".3" stroke-linejoin="round" stroke-linecap="butt"/><path d="M 321 290 L 288 296 L 89.5 296 A 57.25 57.25 0 0 1 89.5 181.5 L 600 182 C 736 182 847 309 847 465 C 847 626 736 758 600 758 L 392 758 A 50 50 0 0 1 342 708 L 342 462" stroke="#4a577f" stroke-width="12.3" stroke-opacity=".3" stroke-linejoin="round" stroke-linecap="butt"/><path d="M312.8,300.6L328.1,273.5M307.5,306.4L319.4,280.2M300.4,305.1L309.8,278.7M294.6,308.6L300.8,283M287.3,307.9L291.7,283.6M278.7,307L284.4,284.1M272,310.4L275.1,286.7M264,305.4L267.1,281.9M255.9,311.7L259.2,286.8M247.9,305.1L251.2,280.4M240.2,308.5L242.9,284.3M232.2,307.4L234.9,283.4M223.8,307L227.3,282.9M215.8,305.2L219.3,281.4M208.6,308.6L210.4,285M200.6,309.2L202.4,285.8M191.8,305.4L195.2,281.7M183.8,305.2L187.2,281.8M176.5,309.2L178.5,284.6M168.5,307.1L170.5,282.7M160.7,309.9L162.3,285.4M152.7,304.8L154.3,280.6M144.7,309.2L146.3,284.7M136.7,305.2L138.3,280.9M128.7,307L130.4,282.4M120.7,308.6L122.4,284.2M112.2,308.8L114.9,285M104.2,311L106.9,287.4M96.5,310L98.5,286M88.5,304.5L90.6,280.7M78.9,307.3L84.1,283.8M69.6,304.6L78,282.3M60.8,300.6L72.6,279.1M53.1,295L67.7,275.6M44.6,290.6L61.7,273.5M36.1,285.4L55.2,271M30.3,276.8L51.5,266.2M24.7,268.6L46.9,261.2M23.2,259.1L46.9,253.7M24.8,249L48.8,247M21.9,240L46.5,241.2M18.4,230.2L42.4,234.7M25,220.9L47.9,230M24.2,210.4L45.3,222.7M30.5,203.2L49.8,217.1M33.8,193.6L50.8,209.9M42.2,187.9L57.5,207.1M49.3,181.3L61.6,202.2M57.3,175.7L66.6,197.8M67.7,175.2L73.7,198.3M76,167.6L78,191M86.2,168L84.8,191.2M94.3,170.5L92.9,194.7M102.3,166.8L100.9,190.7M111.3,171.3L108,196.3M119.3,169L116,193.8M127.1,169.4L124.2,193.8M135.1,172.9L132.2,197.1M142.3,171L141,195.3M150.3,170.5L149,194.4M158.9,167.7L156.4,191.4M166.9,167.5L164.4,191M174.9,170.3L172.4,193.9M182.9,169.7L180.4,193.1M190.9,171.3L188.4,195.2M198.9,170.5L196.4,194.1M206.5,167L204.7,192M214.6,167L212.8,191.8M222.7,167.9L220.6,192.7M230.7,168.2L228.6,192.7M238.7,170L236.6,194.2M246.7,171.6L244.6,195.6M254.3,172.4L253,195.8M262.3,172.9L261,196.1M271.1,169.3L268.2,192.4M279.1,171.4L276.2,194.3M287.3,167L284,190.7M295.3,171.7L292,195.1M303,169.2L300.3,193.4M311,168.2L308.3,192.2M318.4,166.7L316.9,190.8M326.4,167.9L324.9,191.7M334.5,167.2L332.8,191.6M342.5,169.4L340.8,193.6M351,170.7L348.3,194.7M359,173.7L356.3,197.5M366.6,172.4L364.8,196.2M374.6,169.9L372.8,193.6M382.4,166.8L380.9,190.3M390.4,167.7L388.9,190.9M398.6,168.1L396.7,192.1M406.6,172L404.7,195.8M414.7,167.2L412.7,190.4M422.7,169.4L420.7,192.5M431.1,166.9L428.3,191.3M439.1,169.1L436.3,193.3M447.3,170.6L444.1,194.7M455.3,170.5L452.1,194.4M462.4,168.7L461,193.6M470.4,171.9L469,196.6M479,172.6L476.4,196.2M487,173.1L484.4,196.5M495,168.9L492.4,192.5M503,169.9L500.4,193.3M510.8,171.6L508.6,195.2M518.8,170.8L516.6,194.1M527.2,170.9L524.1,195.3M535.2,172.5L532.1,196.7M542.8,170.1L540.5,193.4M550.8,171.1L548.5,194.1M558.5,166.3L556.9,190.9M566.5,170.2L564.9,194.7M575.4,170.9L572,194.8M583.4,172.8L580,196.4M591.3,171.7L588.1,195.4M599.3,171.9L596.1,195.4M606.9,170.2L604.5,193.6M615.1,173L612,196M623.4,172.1L619.8,195.6M631.8,172.7L627.4,195.9M640.1,175.9L634.1,199.5M648.8,175.1L642,198.2M656.5,178.4L649,201.8M664.3,181.6L656.1,204.5M673.4,181.5L663.7,204.5M680.7,186.2L670.2,208.6M690.4,185.3L678.8,206.8M696.2,193L684,213.9M706.1,192.8L692.4,213.2M712.5,198.7L698.3,218.5M720.4,202.2L705.2,221.5M727.8,206.3L712.1,224.8M735.6,209.6L719.3,228.1M740.5,217.3L723.7,235.1M749.1,220.1L731.4,237.4M754.9,226.5L736.7,243M759.1,233.2L742.2,249.5M766.4,237.7L749.1,253.3M770.9,245.9L752.1,260.3M778.2,250.5L759.2,264.1M784.7,255.4L764.9,269.8M786.4,265L766.3,278.6M792.1,270.9L771.6,284.2M798.9,276.2L778.3,288.7M801.8,283.7L782,296M808.1,289.6L788.1,301.1M810.5,298.8L788.5,309M815.9,305.2L793.9,314.7M821.9,311.1L800.4,320.1M822.5,320.1L801,328.4M831.3,325.5L808,333.2M833,334L809.7,340.8M834.5,341.9L811.3,349M834.6,350.8L811.4,357.1M839.6,358.1L816.1,363M846.3,364.7L822.9,368.9M849.3,371.7L825.1,377.2M849.6,380.3L825.5,385.1M851.1,389L827.4,392.2M849,397.9L825.4,400.5M852.3,405.9L827.7,407.6M855.3,413.8L830.9,414.8M858.9,421.1L834.8,422.7M856.8,429.7L833,430.7M859.5,437.8L835.8,438.2M859.3,446.2L835.8,446M857.4,455L833.9,453.3M859,463.2L835.9,461M859.7,471.6L836,468.7M855.4,479.7L831.9,476.3M859.7,488.7L835.5,483.7M856.1,496.7L832.2,491.2M860.1,504.9L836.7,499.9M851.9,512.2L828.8,506.8M856.7,521.1L833.2,515.4M853.9,529.1L830.9,522.8M852.7,537.6L829.9,530.2M848.3,545.1L825.9,537.2M849.1,553.4L826.8,545.9M842.3,560.1L820.4,552.1M841.6,569L819.2,559.2M842.9,578.1L820.9,567.9M836.8,584.3L815.6,574.7M836.3,593L815.6,582.9M834.7,601.5L813.1,590.2M829.8,608.5L808.7,596.7M827.5,616.9L807.7,604.5M818.1,621.5L798.8,608.7M816.2,629.5L796.1,616.3M811.1,636.1L791.6,622.5M811.8,646.6L793,632M804.5,651.8L786.3,636.8M799.6,658L780.2,642.6M794.4,664.5L775.6,648.7M788.9,671.4L772.1,654.9M785.8,679.6L769.7,662.8M778,683.3L761.1,666.3M772.8,689.8L756.7,672.5M767.9,696.4L751.8,678.6M762.2,702.6L746.9,684.5M753.9,706.2L739.5,687.4M749.1,713.3L735.4,694.3M741,717.6L728.2,696.4M735.2,723.6L723.1,702.2M728.7,728.9L717.9,708.1M720.9,732.2L710.9,711.2M715.1,738.6L705,716.3M708.5,743.9L699.2,721.6M700.9,746.4L691.3,724.3M692.9,749.2L684.2,727M684.2,750.3L676.3,727.8M676.6,753.7L669.6,731.1M670,760.6L664,737.6M660.5,758.5L655.4,735.5M653.7,765.6L649.4,742.1M644.7,764.4L641.4,741M635.3,763.8L634.4,740.6M627,764.5L627,741.5M619.6,768.1L619.2,744M611.2,770.2L611.9,746.4M602,772.4L605.1,747.9M593.8,769.8L597.2,745.7M586.4,772.1L588.6,748.6M578.4,769L580.6,745.8M570.2,769.2L572.9,745.3M562.2,772.3L564.9,748.7M554.9,769.9L556.1,746.1M546.9,769.9L548.1,746.3M538.6,768.6L540.5,744.5M530.6,767.8L532.5,744M522.7,768L524.3,743.5M514.7,770.1L516.3,745.8M506.8,770.1L508.2,746.1M498.8,769.3L500.2,745.5M490.1,773.2L492.9,748.8M482.1,768L484.9,743.9M474.5,769.1L476.6,744.4M466.5,771.2L468.5,746.8M457.9,770.8L461.1,747.1M449.9,769.6L453.1,746.2M442.6,770.1L444.4,746.6M434.6,771.1L436.4,747.9M426,773L429,749.3M418,766.6L421,743.2M410.8,771.4L412.2,746.7M402.8,768L404.2,743.6M394.4,767.4L396.6,743.4M385.2,771.5L389.5,748.1M376.1,765.6L384.2,742.9M365,767.3L376.5,746.5M355.8,761.9L370.8,743.6M351.8,750.8L369.4,735.3M342.9,746.1L363.4,732.9M335.1,739.1L357.2,729.5M333.6,728.5L357,722.7M334.7,718.2L358.5,716.2M327.8,709.1L352.4,711.1M332.7,700.5L357,703.5M328.3,693.3L352.4,694.8M329.9,685.3L353.7,686.8M328,677.4L352.1,678.6M331.7,669.4L355.5,670.6M327.4,660.3L351.5,663.7M332.3,652.3L356.1,655.7M331.2,645.3L355.5,646.8M328.3,637.3L352.3,638.8M326.7,628.8L351.4,631.2M328.4,620.8L352.9,623.2M327.8,612.5L351.8,615.5M328.9,604.5L352.7,607.5M330.5,596.7L355,599.3M332.8,588.7L357.1,591.3M332.4,580.6L356.2,583.4M331.5,572.6L355.1,575.4M333,564.4L357,567.6M330.3,556.4L354,559.6M330.3,548.3L354.3,551.7M329,540.3L352.9,543.7M328.5,532.4L352.6,535.6M332.4,524.4L356.2,527.6M327.9,516.9L351.4,519.1M333.3,508.9L356.6,511.1M330.8,500.8L354.8,503.2M329.2,492.8L353,495.2M329.6,484.5L354,487.5M331,476.5L355.2,479.5M329.9,469.2L353.9,470.8M330.6,461.2L354.4,462.8" stroke="#5b6990" stroke-width="3.5" stroke-opacity=".72"/><path d="M316.5,294L324.4,280M310.4,300.4L316.6,286.8M302.6,298.6L307.5,284.9M296.1,302.7L299.3,289.4M288.4,301.9L290.6,289.3M280,301.6L283,289.8M272.7,304.4L274.3,292.1M264.7,299.8L266.3,287.6M256.7,305.5L258.4,292.6M248.7,299.3L250.4,286.5M240.8,302.6L242.2,290M232.8,301.8L234.2,289.4M224.6,301L226.4,288.6M216.6,299.7L218.4,287.4M209.1,302.8L210,290.6M201.1,303.8L202,291.7M192.6,299.6L194.4,287.4M184.6,299.8L186.4,287.7M177,303.1L178,290.4M169,301.4L170,288.8M161.1,304L161.9,291.3M153.1,299.3L153.9,286.7M145.1,303.1L145.9,290.4M137.1,299.5L137.9,286.9M129.1,300.9L130,288.1M121.1,302.8L122,290.2M112.8,302.7L114.2,290.4M104.8,305.3L106.2,293.1M97,304.1L98,291.7M89,299L90.1,286.7M80.2,301.3L82.9,289.2M71.6,299.3L76,287.7M63.7,295.4L69.8,284.3M56.5,290.6L64,280.5M49,286.1L57.8,277.3M40.8,281.9L50.6,274.4M35.6,274.1L46.6,268.6M30,266.9L41.5,263M28.9,257.8L41.2,255M30.3,248.6L42.7,247.6M27.9,240.3L40.6,240.9M23.9,231.3L36.3,233.6M30.7,223.1L42.5,227.9M29.1,213.3L40,219.6M35.4,206.7L45.3,213.9M37.8,197.5L46.6,205.9M46.1,192.8L54,202.7M52.2,186.3L58.6,197.1M59.6,181.1L64.4,192.6M69,180.5L72.2,192.5M76.6,173.5L77.5,185.6M85.8,173.5L85.1,185.5M94,176.6L93.3,189.1M102,172.5L101.3,184.8M110.5,177.5L108.8,190.4M118.5,174.8L116.8,187.6M126.4,175.3L124.9,188M134.4,178.5L132.9,191M142,177.1L141.3,189.6M150,176.1L149.3,188.6M158.3,173.4L157,185.7M166.3,172.9L165,185M174.3,176.3L173,188.5M182.3,175.3L181,187.4M190.3,177.2L189,189.5M198.3,176L197,188.2M206.1,173.2L205.2,186.2M214.1,172.9L213.2,185.7M222.2,174.1L221.1,186.9M230.2,174L229.1,186.6M238.2,176L237.1,188.6M246.2,177.2L245.1,189.7M254,178.2L253.3,190.3M262,178.4L261.3,190.3M270.4,175L268.9,187M278.4,176.8L276.9,188.6M286.5,172.8L284.8,185M294.5,177.1L292.8,189.2M302.3,175.2L301,187.7M310.3,173.8L309,186.2M318.1,172.6L317.3,185.1M326.1,173.4L325.3,185.7M334.1,173.3L333.2,186M342.1,175.1L341.2,187.6M350.4,176.5L349,189M358.3,179.1L357,191.5M366.1,178.2L365.2,190.6M374.1,175.4L373.2,187.7M382.1,172.7L381.3,184.8M390.1,173.2L389.3,185.2M398.2,174.1L397.2,186.5M406.2,177.6L405.2,189.9M414.2,172.9L413.2,184.9M422.2,174.8L421.2,186.7M430.4,173L428.9,185.6M438.4,174.8L436.9,187.3M446.5,176.7L444.8,189.2M454.5,176.2L452.8,188.6M462,174.8L461.3,187.7M470,177.7L469.3,190.4M478.3,178.4L477,190.7M486.3,178.6L485,190.7M494.4,174.7L493,187M502.4,175.4L501,187.5M510.3,177.5L509.1,189.7M518.3,176.3L517.1,188.4M526.5,177.1L524.9,189.7M534.5,178.3L532.9,190.8M542.3,176L541.1,188M550.3,176.5L549.1,188.5M558.1,172.5L557.3,185.2M566.1,176.1L565.3,188.7M574.6,177L572.8,189.3M582.6,178.5L580.8,190.7M590.5,177.4L588.9,189.7M598.5,177.2L596.9,189.4M606.3,176L605.1,188.1M614.4,178.4L612.8,190.3M622.5,177.9L620.6,190.1M630.7,178.2L628.4,190.1M638.6,181.7L635.5,193.9M647.2,180.5L643.7,192.4M654.7,184.3L650.8,196.4M662.4,187L658.1,198.9M671,187.1L666,199M678.2,191.4L672.8,203M687.5,190.7L681.5,201.8M693.3,198L687,208.8M702.6,198L695.6,208.6M709.1,203.5L701.7,213.7M716.7,206.9L708.8,216.8M724.2,210.5L716.1,220.1M731.6,214.2L723.1,223.8M736.6,221.5L727.9,230.7M744.8,224.4L735.6,233.3M750.7,230.3L741.3,238.8M755,237.3L746.2,245.7M762.4,241.3L753.4,249.4M766.3,249.5L756.6,256.9M773.7,253.7L763.9,260.7M779.8,259L769.6,266.4M781.7,268.1L771.3,275.2M786.9,274.3L776.3,281.2M794,279.2L783.3,285.7M796.9,286.8L786.6,293.1M803.4,292.3L793,298.3M805.1,301.3L793.7,306.6M810.7,307.4L799.3,312.3M816.5,313.4L805.4,318M817.4,322.1L806.3,326.4M825.5,327.5L813.4,331.4M827.5,335.6L815.5,339.1M828.9,343.6L816.9,347.3M829.3,352.2L817.3,355.5M833.9,359.4L821.7,361.9M840.8,365.6L828.7,367.8M843.3,373.1L830.8,375.9M843.9,381.4L831.5,383.9M845,389.8L832.8,391.5M843.3,398.5L831.1,399.9M846.3,406.3L833.6,407.2M849.6,414L837,414.5M852.7,421.5L840.3,422.3M851.1,429.9L838.7,430.5M853.5,437.9L841.3,438.1M853.7,446.1L841.5,446M851.6,454.6L839.5,453.7M853.7,462.7L841.7,461.5M853.7,470.9L841.4,469.4M849.7,478.9L837.6,477.1M853.7,487.4L841.1,484.9M850.5,495.4L838.1,492.5M854.4,503.7L842.2,501.1M846.6,511L834.6,508.1M850.7,519.6L838.6,516.7M848.4,527.6L836.4,524.3M846.9,535.8L835.1,531.9M843,543.3L831.4,539.2M843.6,551.5L832,547.6M837.1,558.2L825.8,554.1M836.1,566.6L824.5,561.6M837.8,575.7L826.4,570.4M831.5,581.9L820.5,576.9M831.5,590.7L820.8,585.4M829.4,598.7L818.3,592.9M824.9,605.7L814,599.6M822.6,613.8L812.3,607.4M813.6,618.5L803.6,611.9M811.2,626.2L800.8,619.4M806.6,632.9L796.5,625.8M807.1,643L797.4,635.4M800.2,648.3L790.8,640.5M794.9,654.2L784.8,646.3M790.1,660.8L780.3,652.6M784.8,667.4L776.1,658.9M782.1,675.7L773.8,667M773.8,679.1L765.1,670.3M769.1,685.8L760.7,676.8M764,692.1L755.7,682.9M758.8,698.5L750.8,689.1M750.3,701.5L742.8,691.7M745.9,708.8L738.8,698.9M737.9,712.4L731.2,701.4M732.4,718.6L726.2,707.6M726,723.7L720.4,713M718.5,727.2L713.4,716.4M712.7,733.2L707.4,721.7M706.4,738.8L701.6,727.3M698.4,740.7L693.4,729.3M690.8,743.8L686.3,732.3M682.2,744.7L678.2,733M674.9,748.3L671.3,736.6M668.5,754.8L665.3,742.9M659.3,753L656.7,741.1M652.6,759.8L650.4,747.7M644,759L642.2,746.9M635.1,758L634.6,746M627,759.1L627.1,747.2M619.5,762L619.3,749.6M611.4,764.5L611.7,752.2M602.8,766.4L604.3,753.7M594.6,764.2L596.4,751.7M587,766.3L588.1,754.2M579,763.6L580.1,751.6M570.8,763.3L572.2,751M562.8,766.9L564.2,754.7M555.2,763.8L555.8,751.5M547.2,764.3L547.8,752.1M539,762.6L540,750.2M531,762.3L532,750M523.1,762.1L523.9,749.4M515.1,764.6L515.9,752M507.2,764.2L507.9,751.8M499.1,763.8L499.9,751.5M490.8,767.3L492.2,754.7M482.8,762.5L484.2,750M475,763L476,750.2M467,765.5L468,752.8M458.7,764.8L460.3,752.6M450.7,764L452.3,751.9M443,764.2L444,752M435,765.6L436,753.6M426.7,767.1L428.3,754.9M418.7,761.2L420.3,749M411.1,765.2L411.9,752.4M403.1,762.2L403.9,749.6M394.9,761.6L396.1,749.2M386.2,766.2L388.4,754M378.2,759.8L382.3,748.1M367.8,762.3L373.7,751.5M359.5,757.4L367.3,747.9M356,747.2L365.1,739.2M348,742.7L358.6,735.9M340.4,736.8L351.8,731.8M339.2,727.2L351.3,724.1M340,717.8L352.3,716.8M334,709.6L346.7,710.6M338.5,701.3L351.1,702.8M334.4,693.6L346.9,694.4M335.6,685.6L348,686.4M333.8,677.7L346.3,678.3M337.1,669.7L349.4,670.3M333.2,661.2L345.7,662.9M337.7,653.2L350,654.9M337.1,645.6L349.6,646.4M333.7,637.6L346.2,638.4M332.7,629.4L345.5,630.7M334.1,621.4L346.8,622.7M333.6,613.2L346.1,614.8M334.4,605.2L346.7,606.8M336.6,597.3L349.2,598.7M338.5,589.3L351,590.7M338.4,581.3L350.7,582.7M337.1,573.3L349.3,574.7M338.9,565.2L351.3,566.9M335.8,557.2L348,558.9M336.2,549.1L348.7,550.9M334.6,541.1L346.9,542.9M334.3,533.2L346.8,534.9M337.8,525.2L350.2,526.9M333.7,517.4L345.9,518.6M338.8,509.4L350.8,510.6M337,501.4L349.4,502.6M335,493.4L347.3,494.6M335.7,485.2L348.4,486.8M336.7,477.2L349.3,478.8M335.8,469.6L348.2,470.4M336.1,461.6L348.5,462.4" stroke="#8d9cc0" stroke-width="2.6" stroke-opacity=".75"/></g><path d="M302.3,311.3L325.9,271.5M291.7,313.7L305.1,275.1M280.4,315.1L285,279.8M265.9,314.2L267.2,279.5M249.7,314.9L251.3,278.3M234.2,314L234.9,278.5M217.6,314L219.5,278.8M203,313.6L202,279M185.6,313.6L187.5,278.9M170.8,314.4L170.3,278.4M155.1,314.1L153.9,278.2M139.1,314.5L137.9,278.5M123.1,314.7L122,278.6M106.2,314.4L106.8,279.6M90.8,313.9L90.3,278.7M72.4,312.7L76.6,277.8M52.8,304.7L66.8,271.8M35.4,292.7L57.7,265.4M22.9,274.5L52,256.3M16,255.3L49.7,244.2M13.9,234.6L49.9,232.8M18.2,212.7L52.4,223.2M27.9,194.9L57.8,212.3M41.8,179.1L66.6,204.8M60.5,169.2L77.1,200.1M81.4,163.8L87.4,197.4M99.9,163L101.4,198.4M117.5,162.7L115.8,199.3M133.2,163.5L132.1,199.4M147.7,163.1L149.6,198.6M164.7,164.1L164.5,198.8M180.8,163.4L180.5,198.1M196.8,163.9L196.5,198.8M212.2,162.8L213.1,199.4M228.4,162.9L228.9,199.2M244.5,163.3L244.8,198.8M259.7,164L261.6,198.4M277.1,164.3L276.2,198.1M293.5,164.2L291.8,198.8M308.9,163.5L308.4,199M324,163.9L325.3,199.2M340.1,163.2L341.2,199M356.9,164L356.4,199.3M372.2,163.9L373.1,198.9M387.9,163.9L389.4,198.3M404.3,163.6L405,198.9M420.4,164.4L421,198.5M437.1,163.4L436.2,199.2M453.5,163.4L451.9,198.7M467.9,163.1L469.5,199.6M484.9,164.1L484.5,198.7M501,164.2L500.4,198.8M516.6,164L516.8,198.5M533.4,163.3L532,199.1M548.7,164.2L548.7,198.3M564.1,163.1L565.3,199.3M581.6,163.4L579.8,198.4M597.4,164.5L596,199.3M612.6,164.5L612.8,198.9M629.5,165.8L627.9,200.6M647.1,168.5L641.8,203.7M663.8,172.1L656.4,207.3M680.8,177.5L669.8,212.3M697.2,184.3L683.4,217M713.3,191.9L696.2,223.3M727.9,201.6L708.4,231.4M742.3,210.6L721.1,239.5M756,221.4L732.5,248.6M767.5,232.3L745.4,258.6M780.4,245.1L755.1,268.5M791.7,257.1L764.9,280.7M802.7,270L774.8,292.1M811.2,283.9L784.3,304.8M821.3,299.2L790.8,316.9M828.9,314L798.9,330.1M837.2,329.5L804.3,343.6M842.7,344.8L810,358.3M848.7,361.5L815.3,371.7M853.9,376.2L819.5,387.6M857.9,393.4L824,401.4M860.9,410.4L825.5,416.1M863.6,426L828.9,432M864.5,443L830,447.1M864.5,460.6L830.3,461.6M865.3,477.6L830.4,476.7M864.4,495.2L828.7,491M861.9,511L827.2,507.1M860.2,527.4L825.4,522.5M856.4,544.5L822.3,536.8M852.1,560L818.6,552.4M847.4,577L813.6,565.9M841.4,592L809.1,581.2M835.2,608L802.3,594.6M827.5,623.4L796.9,608.3M820,638.1L788.9,621.8M810.9,652.9L781.5,634.4M802.1,666.6L771.7,646.9M790.3,680.1L763.8,658.6M780.2,692.6L753.1,670.4M768.2,704.5L742.1,681M755.7,716.6L731.9,691.4M741.7,728.3L720.3,699.2M727.2,737.4L708.7,708.7M712.8,746.3L695.1,715.4M698.8,754.5L681.5,723.7M682.6,760.8L667.7,729.2M666.1,766.5L653.9,734M649.2,770.4L639.4,736.9M630.8,773.5L626.3,739.9M614.6,776L610.6,741.1M595.9,776.3L597.2,740.5M580.7,775.6L580.4,741.1M564.2,775.7L564.9,740.8M549.4,776.4L547.6,741.5M532.9,776L532.1,740.7M517.2,776.1L515.8,740.2M501.3,776L499.7,740.8M484.1,776L484.9,740.3M468.7,776.7L468.3,740.6M451.7,776.2L453.3,741.6M436.9,775.9L436.1,741.6M420,775.8L421,741.1M405.2,776.8L403.8,740.7M388.6,775.7L388.4,740.5M368.3,772.7L376.8,738.7M349.3,761L368.5,732.4M334.1,745.5L362.1,723.6M326.3,724.9L359.4,713.2M322.9,703.2L358.8,702.9M323.3,687.7L358.6,686.4M324.4,672L359.7,670M324.4,654.1L359.7,655.9M324.2,639.8L359.7,638.3M323.6,622.9L359.8,623.1M324.2,606.4L359.4,607.6M323.6,590.8L359.5,591.3M323.8,574.6L358.7,575.4M324.2,558.2L359.3,559.8M323.9,542.1L359.1,543.9M324.3,526.2L359.5,527.8M324.3,511.1L358.7,510.9M323.1,494.9L358.4,495.1M323.2,478.4L359.1,479.6M324.1,463.6L359.3,462.4" fill="none" stroke="#1c2340" stroke-width="1.1" stroke-opacity=".38" filter="url(#bs)"/><path d="M 450 300 L 450 651 L 560 651 C 654.6 651 732 567 732 465 C 732 370 663.6 292 580 292 L 443 292" fill="none" stroke-linejoin="miter" stroke-linecap="butt" stroke="#262e4d" stroke-width="36"/><path d="M472.9,297.6L470.9,307L428.6,303L430.6,293.6zM472.8,329L470.8,338.4L428.4,335.5L430.4,326.1zM472.7,360.8L470.7,370.2L428.8,367.7L430.8,358.3zM471.3,368.9L469.3,376.1L427.8,373.5L429.8,366.3zM471.4,400.7L469.4,407.9L428.7,405.6L430.7,398.4zM470.6,433.5L468.6,440.7L427.7,436.8L429.7,429.6zM471.6,442.1L469.6,451.5L428.3,446.1L430.3,436.7zM472.1,472.4L470.1,481.8L429.4,479.7L431.4,470.3zM471.5,504.5L469.5,513.9L429.4,511.5L431.4,502.1zM470.1,512.6L468.1,519.8L428.4,517.4L430.4,510.2zM471.4,545.9L469.4,553.1L427.5,548L429.5,540.8zM471.8,578.2L469.8,585.4L427.7,579.6L429.7,572.4zM471.5,584.8L469.5,594.2L429.2,591L431.2,581.6zM472.8,617.5L470.8,626.9L429.4,622.3L431.4,612.9zM447.8,628.8L457.2,630.8L453.9,673L444.5,671zM455.8,630.2L463,632.2L459.8,674L452.6,672zM488.6,631L495.8,633L490.9,672.5L483.7,670.5zM519.7,630.4L526.9,632.4L523.8,673.6L516.6,671.6zM528.8,629L538.2,631L532.6,671.9L523.2,669.9zM559.5,629.5L568.9,631.4L565.9,671.4L556.4,669.5zM587.5,625.5L597.1,625.4L600.9,667.7L591.3,667.8zM594.7,625.3L602.1,625.3L607.9,666.9L600.4,666.9zM620.9,616.4L628.2,615L641.7,653.3L634.3,654.8zM644.4,601.2L651.3,598.5L672.8,635L665.9,637.8zM648.6,595.5L657.1,591L680.8,627.2L672.3,631.7zM669.2,576.5L676.8,570.6L704.8,601L697.2,606.9zM685.3,554.4L691.8,547.3L725,570.9L718.6,578zM690.1,548.8L695.2,543.4L729.1,565.4L724,570.8zM701.7,522.6L705.9,516.4L742.6,532.8L738.4,539zM708.4,495.3L711.5,488.5L751.2,498.1L748.1,504.9zM708.1,487.5L711.1,478.4L752.8,487.8L749.7,496.9zM710.1,460.3L711.6,450.8L753.3,451.4L751.7,460.9zM705.5,431L705.5,421.4L747.3,417.8L747.3,427.5zM705.3,423.7L705.4,416.3L746.6,411L746.5,418.5zM697.3,397.3L696.1,389.9L735.3,376.5L736.5,383.8zM684.3,372.6L681.8,365.6L717.5,344.9L719.9,352zM678.4,368.2L674.3,359.5L709.4,337.3L713.5,346zM660.2,346.3L654.5,338.5L685.5,311.7L691.2,319.5zM638.6,330.6L631.4,324.2L655.6,289.9L662.8,296.3zM633.2,326L627.7,321L649.8,285.8L655.3,290.8zM607.5,316.1L601,312.5L615.2,273.5L621.8,277.1zM581.4,312.8L574.2,310.8L577.7,269.5L584.9,271.5zM573.6,313.6L564.2,311.6L567.5,271.1L576.9,273.1zM541.5,314.6L532.1,312.6L535.6,271L545,273zM510.3,313.9L500.9,311.9L502.9,270.5L512.3,272.5zM502.2,312.5L495,310.5L497,269.5L504.2,271.5zM468.8,313.4L461.6,311.4L466.5,269.3L473.7,271.3z" fill="#272f4c" stroke="#1a2140" stroke-width=".9" stroke-linejoin="round"/><path d="M472.8,313.4L470.8,322.8L429.5,319.2L431.5,309.8zM471.4,321.5L469.4,328.7L428.5,325.1L430.5,317.9zM470.4,353.6L468.4,360.8L427.8,356.8L429.8,349.6zM470,385.7L468,392.9L427.9,388.6L429.9,381.4zM472.8,392.7L470.8,402.1L429.7,399.7L431.7,390.3zM472,425.4L470,434.8L428.7,430.9L430.7,421.5zM472.6,456.8L470.6,466.2L428.3,463.4L430.3,454zM471.2,464.9L469.2,472.1L427.3,469.2L429.3,462zM471.4,498.1L469.4,505.3L427,499.9L429,492.7zM470.5,530.2L468.5,537.4L428,531.7L430,524.5zM472.8,537.8L470.8,547.2L428.5,542.1L430.5,532.7zM473.2,570.1L471.2,579.5L428.7,573.7L430.7,564.3zM473,601.4L471,610.8L429,606.4L431,597zM471.6,609.5L469.6,616.7L428,612.3L430,605.1zM470.3,641.8L468.3,649L428.4,643.9L430.4,636.7zM471.8,630.3L479,632.3L475.8,672.3L468.6,670.3zM480.6,629.6L490,631.6L485,671.5L475.6,669.5zM511.6,629L521,631L517.9,672.6L508.5,670.6zM544.9,628.2L554.3,630.2L548.5,672.1L539.1,670.1zM553,629.6L560.2,631.6L554.4,673.1L547.2,671.1zM581.2,628.6L588.7,629.4L590.1,670.7L582.6,669.9zM607.4,621.3L614.9,620.6L625.5,660.6L618,661.4zM613.8,618L623.3,616.1L635,655.4L625.6,657.4zM637.8,604.2L646.7,600.5L666.6,638.3L657.8,642zM659.9,586.7L668,581.4L693,614.5L684.9,619.8zM665.9,582.5L672.2,578.6L698.4,610.2L692,614.2zM683.5,560.7L689.1,555.7L720.7,581.9L715.1,586.9zM696.1,535.5L700.7,529.7L736.3,549.6L731.6,555.4zM697.9,528.9L703.1,520.8L739.5,538.8L734.3,546.9zM705.7,502.1L709.5,493.3L749.1,504.6L745.3,513.4zM709,473.9L711.3,464.6L753.3,469.6L751,478.9zM710.6,466.7L712.6,459.5L754.3,462.9L752.4,470.1zM709.9,437.9L710.6,430.5L750.2,427.8L749.5,435.2zM702.8,410.4L702.3,402.9L741,393.4L741.4,400.9zM698.7,404.5L697.1,395L737.2,383.1L738.8,392.6zM686.9,379.4L683.6,370.4L720.5,351.2L723.8,360.2zM670.5,357.1L665.6,348.8L697.7,323.4L702.5,331.7zM666.7,350.9L663,344.5L693.5,317.8L697.2,324.3zM644.7,332L639.8,326.4L665.8,296.3L670.8,301.9zM620.1,321L614.1,316.6L632.7,279.9L638.8,284.3zM613.7,319.3L605.3,314.7L622,276.3L630.4,280.9zM588.3,314.4L579,312L584.6,270.6L593.9,273zM558.1,313.4L548.7,311.4L551,270.7L560.4,272.7zM550,312L542.8,310L545.1,269.7L552.3,271.7zM517.6,313.8L510.4,311.8L513.6,270.7L520.8,272.7zM485.2,312L478,310L482.1,269.8L489.3,271.8zM476.9,314.8L467.5,312.8L472.4,270.3L481.8,272.3zM444.8,314.8L435.4,312.8L440.6,271.5L450,273.5z" fill="#2c3555" stroke="#1a2140" stroke-width=".9" stroke-linejoin="round"/><path d="M471.5,305.6L469.5,312.8L427.6,308.9L429.6,301.7zM471.4,337.1L469.4,344.3L427.4,341.4L429.4,334.2zM471.8,345.5L469.8,354.9L428.8,350.9L430.8,341.5zM471.4,377.6L469.4,387L428.9,382.8L430.9,373.4zM472.8,410.2L470.8,419.6L429.4,414.1L431.4,404.7zM471.4,418.2L469.4,425.4L428.4,420L430.4,412.8zM470.2,450.1L468.2,457.3L427.3,452L429.3,444.8zM470.7,480.5L468.7,487.7L428.4,485.6L430.4,478.4zM472.8,490L470.8,499.4L428,494L430,484.6zM471.9,522.1L469.9,531.5L429,525.8L431,516.4zM471.8,552.4L469.8,561.8L429,559.5L431,550.1zM470.4,560.5L468.4,567.7L428,565.4L430,558.2zM470.1,592.9L468.1,600.1L428.2,596.9L430.2,589.7zM471.4,625.6L469.4,632.8L428.4,628.1L430.4,620.9zM471.7,633.7L469.7,643.1L429.4,638L431.4,628.6zM463.7,628.9L473.1,630.9L469.9,671.3L460.5,669.3zM496.3,628.3L505.7,630.3L501.2,671.7L491.8,669.7zM504.4,629.7L511.6,631.7L507.1,672.7L499.9,670.7zM536.9,630.4L544.1,632.4L538.5,672.9L531.3,670.9zM566.5,630.8L573.9,632.3L572.8,672L565.5,670.5zM574.1,628.1L583.7,629L583,670.7L573.4,669.8zM600.3,622.2L609.9,621.2L618.6,662.1L609.1,663.1zM625,612.1L634.2,609.2L652.2,647L643,649.8zM631.8,609.8L639,607.7L658.6,644.2L651.4,646.3zM654.9,592L661.6,588.6L686.6,623.3L679.9,626.7zM674.9,571.8L680.8,567.3L709.8,596.3L703.8,600.8zM678.3,565.9L685.3,559.3L716.1,587L709.1,593.6zM691.8,541.5L697.6,533.8L732.7,555.3L726.8,563zM702.9,514.7L707.4,506.2L744.9,523L740.4,531.5zM706.1,508.1L709.8,501.5L747.5,516.7L743.9,523.3zM710.2,480.5L712.8,473.5L754.3,481.2L751.8,488.2zM711.1,453L712.5,445.6L753.7,444.5L752.4,451.9zM709.4,445.3L710.2,435.7L750.3,434.6L749.5,444.2zM703.6,417.7L702.8,408.1L742.2,400.2L743,409.7zM692.4,391.5L689.9,382.2L730.3,367.1L732.7,376.4zM690.4,384.5L688.6,377.3L727.9,360.6L729.6,367.8zM675.2,361.7L672.1,354.9L705.8,331.4L708.9,338.2zM655.8,340.6L651.4,334.5L680.8,306.5L685.1,312.6zM649.7,337.2L643.2,330.1L671.1,301L677.5,308.2zM625.9,324.9L618.1,319.3L638.9,283.4L646.8,288.9zM602,316.1L593,312.6L602.7,272.1L611.6,275.6zM595.5,313.6L588.5,310.8L595.7,270.2L602.6,273zM565.5,312.2L558.3,310.2L561.6,270.1L568.8,272.1zM533.4,313.2L526.2,311.2L529.7,270L536.9,272zM525.7,315.2L516.3,313.2L519.5,271.7L528.9,273.7zM493.3,313.4L483.9,311.4L488,270.8L497.4,272.8zM461.2,314.8L451.8,312.8L456.2,270L465.6,272zM453.1,313.4L445.9,311.4L450.3,269L457.5,271z" fill="#313a5c" stroke="#1a2140" stroke-width=".9" stroke-linejoin="round"/><g filter="url(#bl)" fill="none" stroke-linecap="round"><path d="M 450 300 L 450 651 L 560 651 C 654.6 651 732 567 732 465 C 732 370 663.6 292 580 292 L 443 292" stroke="#3a466c" stroke-width="25.4" stroke-opacity=".3" stroke-linejoin="round" stroke-linecap="butt"/><path d="M 450 300 L 450 651 L 560 651 C 654.6 651 732 567 732 465 C 732 370 663.6 292 580 292 L 443 292" stroke="#4a577f" stroke-width="12.3" stroke-opacity=".3" stroke-linejoin="round" stroke-linecap="butt"/><path d="M459.8,301.1L435.2,298.9M464,309.1L439.7,306.9M464.4,317L440.4,314.9M462.2,325L438.5,322.9M464.4,332.8L439.8,331.1M461.9,340.8L437.5,339.1M465.1,349.1L441.3,346.8M460.6,357.1L437,354.8M464.7,364.6L440.4,363.2M464.1,372.6L440,371.2M462.2,381.1L438.7,378.7M462.6,389.1L439.3,386.6M462.2,396.6L438.3,395.2M461.6,404.5L437.9,403.2M463.9,413.4L439.9,410.3M464.8,421.4L441,418.3M463.7,429L439.8,426.7M460.8,436.9L437.1,434.7M463.5,445.3L439.6,442.3M463.3,453.3L439.7,450.3M465.4,460.6L440.9,459M462.3,468.6L438,466.9M465.2,476.4L441.6,475.1M461.5,484.4L438.1,483.1M462.9,493.3L438.1,490.2M460.2,501.3L435.6,498.2M464.2,508.4L441,507M461.8,516.4L438.7,515M465.2,525.3L441.5,522M458.1,533.3L434.6,530M464.2,541.1L439.7,538.2M461.5,549.1L437.2,546.2M463,556.3L439.3,555M462.3,564.3L438.9,563M463.5,573.3L438.9,569.9M461.1,581.3L436.7,577.9M459.5,588.5L436.1,586.7M460.5,596.5L437.3,594.7M460.5,604.9L436.1,602.3M462.7,612.9L438.6,610.3M464.7,620.9L440.7,618.2M461.5,628.9L437.7,626.2M462.2,637L438.9,634M462.4,645L439.3,642M451.5,641.1L449.6,665.6M459.5,637.6L457.6,661.8M467.4,637.9L465.6,661.3M475.4,638.1L473.5,661.3M483.9,638.4L481,661.6M491.9,642.7L489,665.7M499.8,636.1L497.1,660.1M507.8,642.1L505.1,665.9M515.3,641.5L513.5,665.6M523.3,636.5L521.5,660.4M532.1,641.3L528.8,665M540,638.5L536.8,662M548.1,637.7L544.7,662M556.1,637.5L552.7,661.5M563.2,636L561.4,659.2M570.6,638.3L570,661.4M578.6,638.9L578.2,663.1M585.6,635.7L586.4,659.6M592.5,632.8L594.6,657.3M599.8,632.2L603.2,656.4M607.5,633L612.6,656.8M613.3,627.3L619.5,650.5M619.6,622.9L626.4,645.7M626.5,620.4L634.3,642.6M634.8,621.7L645.2,643.6M639.3,614.7L650.7,635.9M647,611.6L658.6,633.6M653.4,607.7L665.8,628.9M658.3,601.9L672.1,622.9M662,595L676.5,615.1M668.6,590.9L683.1,610.1M674,585.8L689.2,604.1M678.5,579.9L694.7,597.6M684.1,574.9L700.9,591.7M686,567.2L703.8,583.2M692.1,562.3L710.4,577.5M696.8,556.9L716.1,570.6M700.3,550.2L719.9,563M701.6,542.3L721.9,554.8M703.5,535L724.1,546.6M708.9,529.3L730,539.7M711.4,522.2L732.7,531.7M712.2,514.1L734,523.8M718.3,507.9L740.2,516.7M714.2,500L737.2,506.6M718.1,493.1L741.1,498.7M718.9,485.3L743.1,490.8M722.8,478.1L746.9,482.5M718.7,470.6L743,473.5M719.6,463.1L743.8,465.1M718.9,456L743,456.3M722.6,448.2L746.6,447.5M717.3,440.7L740.5,440.1M717.3,433.2L740.2,431.6M713.1,426L737.4,423.9M715,417.9L738.9,414.9M711.2,411.6L734.1,407M708.7,404.6L731.1,399.1M707.4,397.2L730.6,390.2M704.7,390.1L727.5,382.3M699.1,384.3L722.5,375.5M699.3,375.7L722.1,366M694.3,370.4L715.7,359.3M692.3,362.7L713,350.7M684.2,359.2L704.6,346.3M680.6,352.6L700.1,338.9M675.4,347.5L693.9,332.8M669.4,343L687.1,327.6M664.3,336.7L682.2,321.2M657.5,333.4L674.5,317.1M653.5,326.4L669.6,309.6M645.6,324.9L660.7,307.4M639.3,322.2L653.4,302.3M635.4,314L648.2,293.6M626.9,314.1L639,293.3M621,309L631.8,287.7M613.7,307.5L623.4,285.3M606.2,307.4L614.5,284.8M600.2,303.7L605.8,280.2M592.8,303.6L597,280M585.3,302.2L588.5,278.2M577.8,301.5L579.8,277.6M569.9,305.7L571.8,282.2M561.9,305.2L563.8,282M554.2,300.8L555.5,277.2M546.2,305.4L547.5,282.1M537.9,305.2L539.9,281.1M529.9,300.9L531.9,277M522,307.4L523.8,283.3M514,307.1L515.8,283.2M506.3,306.6L507.5,282.6M498.3,304.4L499.5,280.6M489.8,304.7L492.1,281.1M481.8,304.3L484.1,281M473.5,305.4L476.4,280.7M465.6,303.1L468.4,278.6M457.7,303.4L460.3,278.6M449.7,303.5L452.3,279M441.5,307.2L444.5,283.3" stroke="#5b6990" stroke-width="3.5" stroke-opacity=".72"/><path d="M453.6,300.6L440.9,299.4M458.3,308.6L445.7,307.4M458.3,316.5L445.9,315.4M456.5,324.5L444.2,323.4M458.3,332.4L445.5,331.5M456.2,340.4L443.6,339.5M459.3,348.5L447,347.3M455.2,356.5L443,355.3M458.6,364.3L446,363.5M458.4,372.3L445.9,371.5M456.5,380.5L444.4,379.3M457.3,388.5L445.2,387.2M456.1,396.2L443.7,395.5M455.8,404.2L443.6,403.5M457.8,412.7L445.4,411M459.1,420.6L446.8,419M457.8,428.4L445.4,427.2M455.3,436.4L443,435.2M457.8,444.6L445.4,443M458,452.6L445.7,451M459.4,460.2L446.7,459.4M456.7,468.2L444.1,467.3M459.3,476.1L447.1,475.4M456,484.1L443.9,483.4M456.8,492.6L444,490.9M454.5,500.5L441.8,498.9M458.5,508.1L446.5,507.3M456.4,516.1L444.5,515.3M459.3,524.5L447.1,522.8M452.6,532.5L440.5,530.8M458.2,540.4L445.5,538.9M455.8,548.4L443.2,546.9M457.1,556L444.9,555.3M456.9,564L444.8,563.3M457.3,572.5L444.5,570.8M455.2,580.5L442.6,578.7M453.8,588.1L441.7,587.1M455.1,596.1L443.2,595.1M454.3,604.2L441.7,602.9M457,612.2L444.5,610.9M458.6,620.3L446.2,618.9M455.8,628.2L443.5,626.9M456.4,636.3L444.3,634.8M457,644.3L445.1,642.8M451,647L450,659.7M459,643.1L458,655.7M467,643.8L466,655.9M475,643.6L474,655.6M483.2,644.2L481.7,656.2M491.2,648.1L489.7,659.9M499.1,642.2L497.8,654.6M507.1,647.8L505.8,660.1M514.9,647.4L514,659.8M522.9,642L522,654.3M531.3,647.2L529.6,659.5M539.2,644L537.5,656.1M547.3,643.8L545.5,656.3M555.2,643.2L553.5,655.6M562.8,641.8L561.9,653.8M570.4,643.7L570.1,655.6M578.5,644.9L578.3,657.4M585.8,641.3L586.2,653.7M593,638.9L594.2,651.6M600.6,637.9L602.3,650.4M608.8,639L611.4,651.3M614.8,632.8L618,644.8M621.3,628.6L624.9,640.4M628.3,625.6L632.3,637.1M637.4,627.1L642.8,638.4M642,619.7L647.8,630.6M649.8,617L655.8,628.4M656.3,612.6L662.7,623.6M661.8,607.2L668.9,618M665.4,599.7L672.9,610.1M672.2,595.6L679.7,605.6M677.6,590.1L685.4,599.6M682.6,584.3L691,593.5M688.1,578.9L696.7,587.5M690.3,571.1L699.5,579.4M696.2,565.8L705.7,573.7M701.7,560.3L711.7,567.4M704.9,553.3L715.1,559.8M706.8,545.4L717.3,551.9M708.5,537.8L719.2,543.8M714.2,531.9L725.2,537.3M716.5,524.5L727.5,529.4M717.7,516.5L728.9,521.5M723.5,510L734.8,514.5M720,501.6L731.9,505M723.5,494.5L735.4,497.4M724.8,486.7L737.3,489.5M728.4,479.1L740.8,481.5M724.8,471.3L737.4,472.8M725.3,463.6L737.8,464.6M724.7,456.1L737.2,456.2M728.1,448L740.5,447.7M723,440.5L735,440.2M722.6,432.8L734.5,432M719.3,425.4L731.9,424.4M720.8,417.2L733.2,415.6M716.9,410.5L728.8,408.1M714,403.3L725.6,400.5M713.1,395.4L725.1,391.9M710,388.3L721.8,384.3M704.8,382.1L716.9,377.6M704.6,373.5L716.4,368.4M699.5,367.7L710.6,361.9M697.1,359.9L707.8,353.8M689.4,355.9L699.9,349.2M685.3,349.3L695.4,342.2M680,343.8L689.6,336.2M673.6,339.4L682.7,331.4M668.7,332.9L678,324.8M661.5,329.6L670.3,321.2M657.5,322.2L665.8,313.5M649.2,320.8L657,311.8M642.7,317.3L650,307M638.3,309.3L645,298.7M630,308.7L636.2,298M623.7,303.8L629.2,292.8M616.1,302.1L621.1,290.6M608.2,302.2L612.4,290.5M601.6,298L604.5,285.8M593.8,298.2L595.9,286M586.1,296.3L587.7,283.9M578.3,296L579.3,283.6M570.3,300L571.3,287.8M562.3,299.8L563.3,287.8M554.5,295L555.2,282.8M546.5,300.1L547.2,288M538.3,299.2L539.4,286.7M530.4,295.2L531.4,282.9M522.4,301.2L523.4,288.7M514.4,301.2L515.4,288.9M506.6,300.8L507.2,288.3M498.6,299L499.2,286.7M490.3,299L491.5,286.8M482.3,299L483.6,286.9M474.2,299.3L475.7,286.5M466.2,297.4L467.7,284.7M458.3,297.3L459.6,284.4M450.3,297.8L451.7,285.1M442.2,301.1L443.8,288.7" stroke="#8d9cc0" stroke-width="2.6" stroke-opacity=".75"/></g><path d="M468.6,307L432.6,307M468.5,322.8L433.4,323.2M468.5,338.4L432.5,339.5M467.7,354.9L432.8,354.9M468.4,370.2L432.8,371.7M467.4,387L432.9,386.8M468.6,402.1L433.6,403.7M468.6,419.6L433.3,418.1M467.8,434.8L432.7,434.9M467.5,451.5L432.4,450.1M468.4,466.2L432.4,467.4M467.9,481.8L433.3,483.7M468.5,499.4L432.2,498M467.4,513.9L433.3,515.5M467.8,531.5L433,529.8M468.5,547.2L432.6,546.1M467.7,561.8L433,563.5M468.8,579.5L432.7,577.7M467.4,594.2L433.2,595M468.7,610.8L433,610.4M468.5,626.9L433.4,626.3M467.6,643.1L433.4,642M457.2,633L457.9,668.8M473.1,633.1L473.9,667.4M490,633.6L489,667.6M505.7,632.6L505.2,667.7M521,633.1L521.9,668.5M538.2,633.2L536.6,667.9M554.3,632.5L552.5,668.1M568.9,633.5L569.8,667.4M583.9,631.2L586.5,666.3M597.6,627.6L603.9,662.9M610.6,623.3L621.2,657.1M624.1,618L637.1,650.2M635.3,611.1L653.7,641.5M648,602.3L667.6,632.7M658.6,592.8L681.2,621.4M669.5,583L693,608.9M678.5,572L704.3,595.4M687,560.5L715.1,581.4M693.6,548.4L723.7,565.4M699.6,534.8L730.9,550.1M705.1,521.6L737.2,533.7M709.5,506.8L742.2,518.1M711.6,493.7L746,499.9M713.3,478.7L749.1,483.4M713.6,464.7L749.4,465.5M713.8,450.7L749,447.6M712.3,435.5L745.9,431.1M707.7,420.9L742.6,414.8M704.8,407.5L737.3,397.5M699.1,394.2L731.9,380.9M692,381.2L724.8,365.4M685.5,369.2L714.9,349.9M676.1,358.1L703.8,336.5M667.2,347.4L692,323.1M655.9,336.9L679.9,312M644.4,328.4L665.5,301.8M632.5,322.3L650.1,291.5M619,317.2L633.7,285.4M605.9,312.6L617,279M593.4,310.5L598.1,275.4M579.1,309.8L580.4,274.4M564.2,309.5L563.5,275.1M548.7,309.4L547,274.8M532.1,310.4L531.6,275M516.3,310.9L515.5,275.6M500.9,309.8L498.9,274.6M483.9,309.4L484,274.8M467.5,310.6L468.4,274.4M451.8,310.5L452.2,274.2M435.4,310.6L436.6,275.5" fill="none" stroke="#1c2340" stroke-width="1.1" stroke-opacity=".38" filter="url(#bs)"/><path d="M473.2,628.6L473.7,631.5L428.5,641.7L427,632.2zM472.1,627.5L473.8,630L433.2,663.4L427.6,655.6zM470.5,627.1L473.2,628.5L453.9,674.1L445.3,669.8z" fill="#272f4c" stroke="#1a2140" stroke-width=".9" stroke-linejoin="round"/><path d="M472.9,628.2L473.8,631L431.5,647.9L428.6,638.8zM471.6,627.3L473.7,629.4L433.2,674.6L426.4,667.8zM470,627.2L472.8,628.1L462.3,672L453.2,669.1z" fill="#2c3555" stroke="#1a2140" stroke-width=".9" stroke-linejoin="round"/><path d="M472.5,627.8L473.9,630.5L431.5,655.6L427.2,647zM471,627.2L473.5,628.9L445.6,673.2L437.8,667.5zM469.5,627.3L472.4,627.8L469,672.9L459.5,671.5z" fill="#313a5c" stroke="#1a2140" stroke-width=".9" stroke-linejoin="round"/><g filter="url(#bl)" fill="none" stroke-linecap="round"><path d="M461.1,631.9L436.3,635.6M461.6,633.3L438.2,640.8M461.4,635.1L437.6,647.1M461.7,636.9L438.4,653.7M461.5,639.5L437.9,663.1M464.2,639.3L447.4,662.4M465.9,639.6L453.8,663.6M467.7,639.3L460.3,662.5M469.1,639.7L465.5,663.8" stroke="#5b6990" stroke-width="3.4" stroke-opacity=".8"/><path d="M454.3,632.9L442.3,634.7M455.1,635.4L443.8,639M454.8,638.4L443.3,644.2M455.3,641.5L444,649.7M455,646L443.6,657.4M459.5,645.6L451.5,656.8M462.6,646.2L456.7,657.8M465.7,645.7L462.1,656.9M468.1,646.3L466.4,658" stroke="#8d9cc0" stroke-width="2.4" stroke-opacity=".7"/></g><rect x="439.5" y="719" width="12.5" height="13.5" rx="3" fill="#1e93ad"/><rect x="440.5" y="719.5" width="7" height="12" rx="3" fill="#4fd3e6"/></svg>
</div></body></html>
